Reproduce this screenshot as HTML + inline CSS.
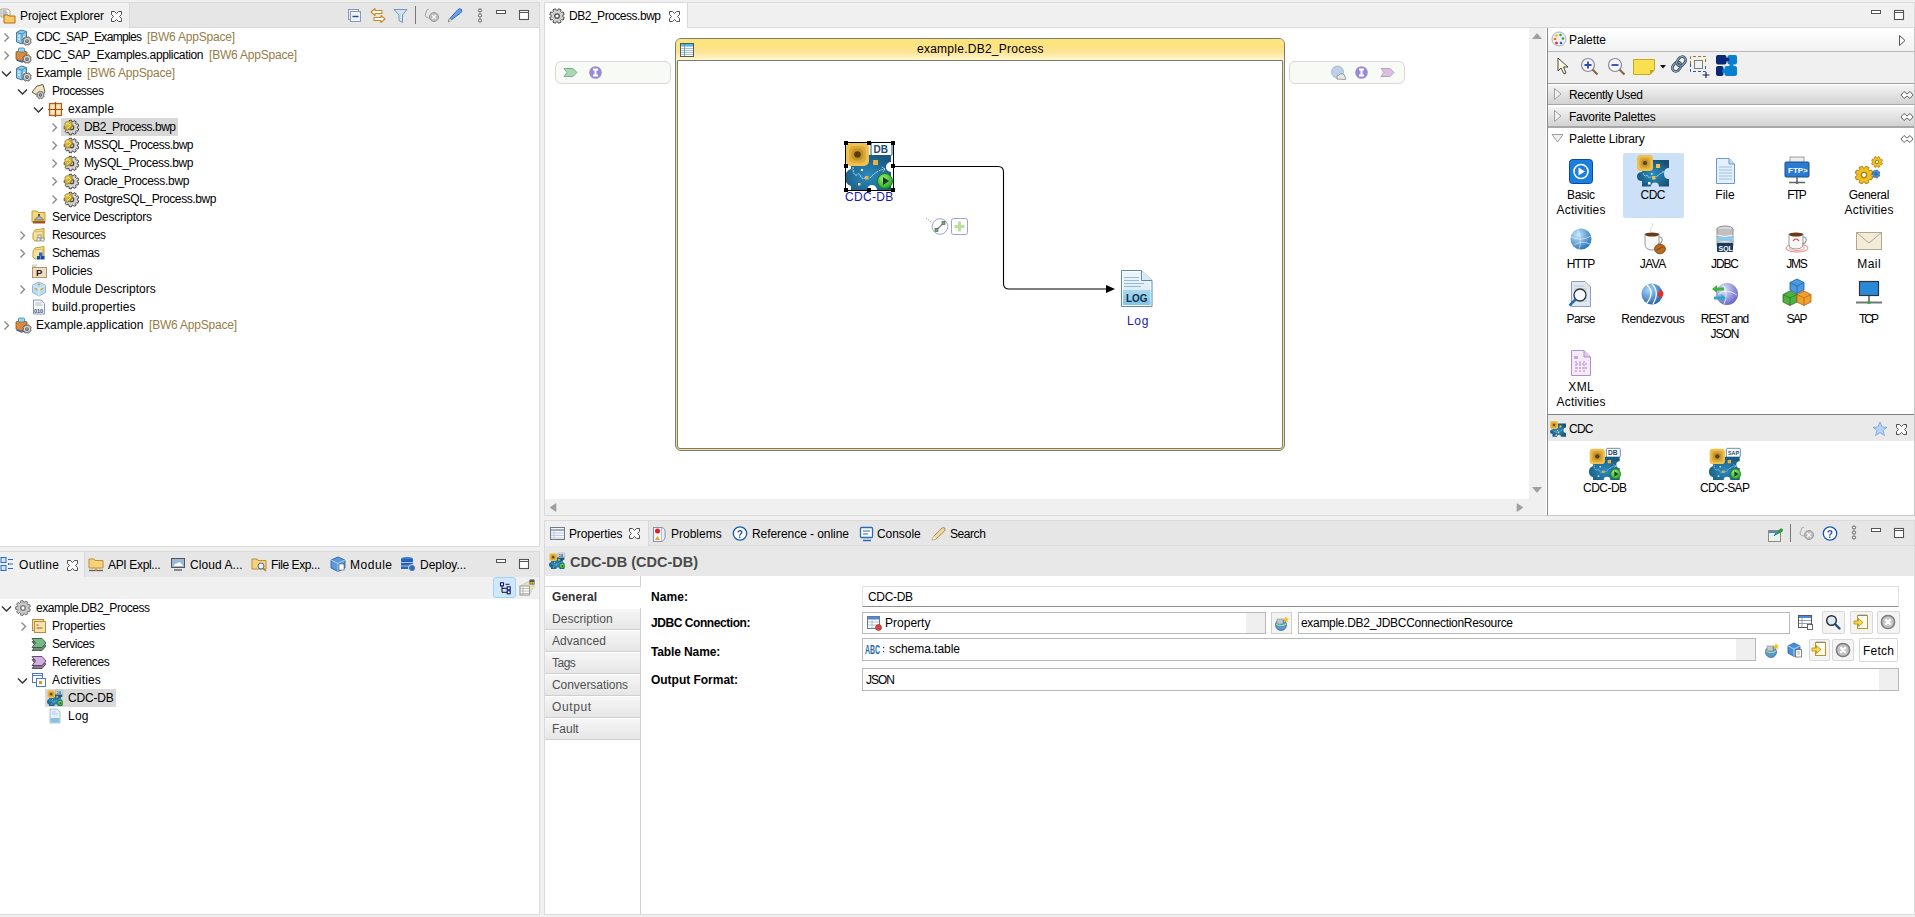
<!DOCTYPE html><html><head><meta charset="utf-8"><style>
*{margin:0;padding:0;box-sizing:border-box}
html,body{width:1915px;height:917px;overflow:hidden;background:#f0f0f0;font-family:"Liberation Sans",sans-serif;font-size:12px;color:#000}
.t{position:absolute;white-space:nowrap;letter-spacing:-0.2px}
svg{overflow:visible}
</style></head><body><div style="position:absolute;left:-1px;top:2px;width:541px;height:545px;border:1px solid #dadada;background:#fff"></div>
<div style="position:absolute;left:0px;top:3px;width:539px;height:25px;background:#e6e6e6;border-bottom:1px solid #d9d9d9"></div>
<div style="position:absolute;left:0px;top:3px;width:130px;height:25px;background:#f0f0f0;border-right:1px solid #d9d9d9"></div>
<div style="position:absolute;left:-1px;top:551px;width:541px;height:364px;border:1px solid #dadada;background:#fff"></div>
<div style="position:absolute;left:0px;top:552px;width:539px;height:25px;background:#e6e6e6"></div>
<div style="position:absolute;left:0px;top:552px;width:85px;height:25px;background:#f0f0f0;border-right:1px solid #d9d9d9"></div>
<div style="position:absolute;left:0px;top:577px;width:539px;height:22px;background:#f0f0f0"></div>
<div style="position:absolute;left:544px;top:2px;width:1371px;height:514px;border:1px solid #dadada;background:#fff"></div>
<div style="position:absolute;left:545px;top:3px;width:1369px;height:25px;background:#f0f0f0;border-bottom:1px solid #d9d9d9"></div>
<div style="position:absolute;left:545px;top:3px;width:143px;height:25px;background:#fff;border-right:1px solid #d9d9d9"></div>
<div style="position:absolute;left:544px;top:520px;width:1371px;height:395px;border:1px solid #dadada;background:#fff"></div>
<div style="position:absolute;left:545px;top:521px;width:1369px;height:25px;background:#e6e6e6;border-bottom:1px solid #d9d9d9"></div>
<div style="position:absolute;left:545px;top:521px;width:104px;height:25px;background:#f0f0f0;border-right:1px solid #d9d9d9"></div>
<div style="position:absolute;left:545px;top:546px;width:1369px;height:30px;background:#e8e8e8"></div>
<svg style="position:absolute;left:0px;top:8px" width="16" height="16" viewBox="0 0 16 16"><path d="M1 1 L8 1 L10 3 L10 9 L1 9 Z" fill="#f4f4f4" stroke="#b09a6a" stroke-width="0.9"/><path d="M2.5 3 h4 M2.5 5 h5 M2.5 7 h5" stroke="#4a70c0" stroke-width="0.8"/><path d="M4 7 L8 7 L9 8 L15 8 L15 15 L4 15 Z" fill="#f6cc60" stroke="#b06a20" stroke-width="1"/></svg>
<div class="t" style="left:20px;top:7px;line-height:18px;letter-spacing:-0.091px;">Project Explorer</div>
<svg style="position:absolute;left:111px;top:11px" width="11" height="11" viewBox="0 0 11 11"><path d="M0.5 0.5 H3.5 L5.5 2.5 L7.5 0.5 H10.5 V3.5 L8.5 5.5 L10.5 7.5 V10.5 H7.5 L5.5 8.5 L3.5 10.5 H0.5 V7.5 L2.5 5.5 L0.5 3.5 Z" fill="#fff" stroke="#505050" stroke-width="1"/></svg>
<svg style="position:absolute;left:347px;top:8px" width="16" height="16" viewBox="0 0 16 16"><rect x="1.5" y="1.5" width="10" height="10" fill="#e8eef8" stroke="#8090b0" stroke-width="0.9"/><rect x="3.5" y="3.5" width="10" height="10" fill="#eef3fa" stroke="#8090b0" stroke-width="0.9"/><path d="M5.5 8.5 h6" stroke="#1a4a90" stroke-width="1.4"/></svg>
<svg style="position:absolute;left:370px;top:7px" width="16" height="16" viewBox="0 0 16 16"><path d="M1 5 L5 1.5 L5 3.5 L12 3.5 L12 6.5 L5 6.5 L5 8.5 Z" fill="#fff" stroke="#c88a20" stroke-width="1.1" stroke-linejoin="round"/><path d="M15 12 L11 8.5 L11 10.5 L4 10.5 L4 13.5 L11 13.5 L11 15.5 Z" fill="#fff" stroke="#c88a20" stroke-width="1.1" stroke-linejoin="round"/></svg>
<svg style="position:absolute;left:393px;top:8px" width="16" height="16" viewBox="0 0 16 16"><path d="M1 1.5 H14 L9.5 7 V14.5 L6 12.5 V7 Z" fill="#cfe2f4" stroke="#7a98bc" stroke-width="1"/></svg>
<div style="position:absolute;left:415px;top:6px;width:1px;height:18px;background:#777"></div>
<svg style="position:absolute;left:424px;top:7px" width="16" height="16" viewBox="0 0 16 16"><path d="M5 2 Q2 2 2 6 Q0 8 2 10 Q4 12 7 10" fill="none" stroke="#aaa" stroke-width="1"/><circle cx="10" cy="10" r="4.5" fill="#bbb" stroke="#999"/><path d="M8 8 L12 12 M12 8 L8 12" stroke="#fff" stroke-width="1.2"/></svg>
<svg style="position:absolute;left:447px;top:7px" width="16" height="16" viewBox="0 0 16 16"><path d="M3 14 L1.5 15 L2 12.5 L11 2.5 Q13 1 14.5 2.5 Q15.5 4.5 13.5 6 Z" fill="#6aa0e8" stroke="#2a5ab8" stroke-width="0.9"/><path d="M1.5 15 L2.5 11.5 L5 13.5 Z" fill="#f0e080"/></svg>
<svg style="position:absolute;left:475px;top:8px" width="10" height="16" viewBox="0 0 10 16"><circle cx="5" cy="2.5" r="1.6" fill="#fff" stroke="#555" stroke-width="1"/><circle cx="5" cy="7.5" r="1.6" fill="#fff" stroke="#555" stroke-width="1"/><circle cx="5" cy="12.5" r="1.6" fill="#fff" stroke="#555" stroke-width="1"/></svg>
<svg style="position:absolute;left:495px;top:9px" width="13" height="8" viewBox="0 0 13 8"><rect x="1.5" y="1.5" width="9" height="3" fill="#fff" stroke="#555" stroke-width="1"/></svg>
<svg style="position:absolute;left:517px;top:9px" width="13" height="13" viewBox="0 0 13 13"><rect x="2.5" y="1.5" width="9" height="9" fill="#fff" stroke="#555" stroke-width="1.1"/><path d="M2.5 3.5 H11.5" stroke="#555" stroke-width="1"/></svg>
<svg style="position:absolute;left:-1px;top:29px" width="16" height="16" viewBox="0 0 16 16"><path d="M5.5 4.5 L9.5 8.5 L5.5 12.5" fill="none" stroke="#8a8a8a" stroke-width="1.4"/></svg>
<svg style="position:absolute;left:15px;top:29px" width="16" height="16" viewBox="0 0 16 16"><path d="M1.5 3.5 L6 1 L11.5 2.5 L11.5 12 L7 15 L1.5 13 Z" fill="#8ec9e8" stroke="#3d7fa8" stroke-width="1"/><path d="M1.5 3.5 L7 5 L11.5 2.5 M7 5 L7 15" fill="none" stroke="#3d7fa8" stroke-width="0.8"/><path d="M3 7 h2 M3 10 h2 M8.5 7.5 h2 M8.5 10.5 h2" stroke="#fff" stroke-width="1"/><polygon points="16.21,12.87 15.59,14.36 14.62,14.10 14.10,14.62 14.36,15.59 12.87,16.21 12.37,15.33 11.63,15.33 11.13,16.21 9.64,15.59 9.90,14.62 9.38,14.10 8.41,14.36 7.79,12.87 8.67,12.37 8.67,11.63 7.79,11.13 8.41,9.64 9.38,9.90 9.90,9.38 9.64,8.41 11.13,7.79 11.63,8.67 12.37,8.67 12.87,7.79 14.36,8.41 14.10,9.38 14.62,9.90 15.59,9.64 16.21,11.13 15.33,11.63 15.33,12.37" fill="#e0e0e0" stroke="#505050" stroke-width="0.9" stroke-linejoin="round"/><circle cx="12" cy="12" r="1.29" fill="#fff" stroke="#505050" stroke-width="1.17"/></svg>
<div class="t" style="left:36px;top:28px;line-height:18px;letter-spacing:-0.670px;">CDC_SAP_Examples</div>
<svg style="position:absolute;left:-1px;top:47px" width="16" height="16" viewBox="0 0 16 16"><path d="M5.5 4.5 L9.5 8.5 L5.5 12.5" fill="none" stroke="#8a8a8a" stroke-width="1.4"/></svg>
<svg style="position:absolute;left:15px;top:47px" width="16" height="16" viewBox="0 0 16 16"><path d="M1 5 L6 3 L12 5 L12 12 L6 14 L1 12 Z" fill="#d98a3a" stroke="#8a4a10" stroke-width="0.8"/><path d="M1.5 13 L7 15 L12 13" fill="none" stroke="#3050c0" stroke-width="1.2"/><rect x="3.5" y="1" width="6" height="4" rx="1" fill="#9ad6ee" stroke="#3d7fa8" stroke-width="0.8"/><polygon points="16.21,12.87 15.59,14.36 14.62,14.10 14.10,14.62 14.36,15.59 12.87,16.21 12.37,15.33 11.63,15.33 11.13,16.21 9.64,15.59 9.90,14.62 9.38,14.10 8.41,14.36 7.79,12.87 8.67,12.37 8.67,11.63 7.79,11.13 8.41,9.64 9.38,9.90 9.90,9.38 9.64,8.41 11.13,7.79 11.63,8.67 12.37,8.67 12.87,7.79 14.36,8.41 14.10,9.38 14.62,9.90 15.59,9.64 16.21,11.13 15.33,11.63 15.33,12.37" fill="#e0e0e0" stroke="#505050" stroke-width="0.9" stroke-linejoin="round"/><circle cx="12" cy="12" r="1.29" fill="#fff" stroke="#505050" stroke-width="1.17"/></svg>
<div class="t" style="left:36px;top:46px;line-height:18px;letter-spacing:-0.343px;">CDC_SAP_Examples.application</div>
<svg style="position:absolute;left:-1px;top:65px" width="16" height="16" viewBox="0 0 16 16"><path d="M3 6.5 L7.5 11 L12 6.5" fill="none" stroke="#333" stroke-width="1.4"/></svg>
<svg style="position:absolute;left:15px;top:65px" width="16" height="16" viewBox="0 0 16 16"><path d="M1.5 3.5 L6 1 L11.5 2.5 L11.5 12 L7 15 L1.5 13 Z" fill="#8ec9e8" stroke="#3d7fa8" stroke-width="1"/><path d="M1.5 3.5 L7 5 L11.5 2.5 M7 5 L7 15" fill="none" stroke="#3d7fa8" stroke-width="0.8"/><path d="M3 7 h2 M3 10 h2 M8.5 7.5 h2 M8.5 10.5 h2" stroke="#fff" stroke-width="1"/><polygon points="16.21,12.87 15.59,14.36 14.62,14.10 14.10,14.62 14.36,15.59 12.87,16.21 12.37,15.33 11.63,15.33 11.13,16.21 9.64,15.59 9.90,14.62 9.38,14.10 8.41,14.36 7.79,12.87 8.67,12.37 8.67,11.63 7.79,11.13 8.41,9.64 9.38,9.90 9.90,9.38 9.64,8.41 11.13,7.79 11.63,8.67 12.37,8.67 12.87,7.79 14.36,8.41 14.10,9.38 14.62,9.90 15.59,9.64 16.21,11.13 15.33,11.63 15.33,12.37" fill="#e0e0e0" stroke="#505050" stroke-width="0.9" stroke-linejoin="round"/><circle cx="12" cy="12" r="1.29" fill="#fff" stroke="#505050" stroke-width="1.17"/></svg>
<div class="t" style="left:36px;top:64px;line-height:18px;letter-spacing:-0.115px;">Example</div>
<svg style="position:absolute;left:15px;top:83px" width="16" height="16" viewBox="0 0 16 16"><path d="M3 6.5 L7.5 11 L12 6.5" fill="none" stroke="#333" stroke-width="1.4"/></svg>
<svg style="position:absolute;left:31px;top:83px" width="16" height="16" viewBox="0 0 16 16"><path d="M1 9 L6 3 L12 1.5 L14 9 L9 14 Z" fill="#efe6c8" stroke="#6a5a3a" stroke-width="1"/><polygon points="13.22,12.77 12.68,14.09 11.81,13.85 11.35,14.31 11.59,15.18 10.27,15.72 9.83,14.95 9.17,14.95 8.73,15.72 7.41,15.18 7.65,14.31 7.19,13.85 6.32,14.09 5.78,12.77 6.55,12.33 6.55,11.67 5.78,11.23 6.32,9.91 7.19,10.15 7.65,9.69 7.41,8.82 8.73,8.28 9.17,9.05 9.83,9.05 10.27,8.28 11.59,8.82 11.35,9.69 11.81,10.15 12.68,9.91 13.22,11.23 12.45,11.67 12.45,12.33" fill="#d8d8d8" stroke="#555" stroke-width="0.8" stroke-linejoin="round"/><circle cx="9.5" cy="12" r="1.14" fill="#fff" stroke="#555" stroke-width="1.04"/></svg>
<div class="t" style="left:52px;top:82px;line-height:18px;letter-spacing:-0.502px;">Processes</div>
<svg style="position:absolute;left:31px;top:101px" width="16" height="16" viewBox="0 0 16 16"><path d="M3 6.5 L7.5 11 L12 6.5" fill="none" stroke="#333" stroke-width="1.4"/></svg>
<svg style="position:absolute;left:47px;top:101px" width="16" height="16" viewBox="0 0 16 16"><rect x="2.5" y="2.5" width="12" height="12" fill="#f4d8a8" stroke="#b0601a" stroke-width="1.2"/><rect x="4" y="4" width="3.5" height="3.5" fill="#fbe8c8"/><rect x="9.5" y="4" width="3.5" height="3.5" fill="#fbe8c8"/><rect x="4" y="9.5" width="3.5" height="3.5" fill="#fbe8c8"/><rect x="9.5" y="9.5" width="3.5" height="3.5" fill="#fbe8c8"/><path d="M8.5 1 V16 M1 8.5 H16" stroke="#9a5010" stroke-width="1.2"/></svg>
<div class="t" style="left:68px;top:100px;line-height:18px;letter-spacing:0.107px;">example</div>
<div style="position:absolute;left:61px;top:118px;width:117px;height:18px;background:#d9d9d9"></div>
<svg style="position:absolute;left:47px;top:119px" width="16" height="16" viewBox="0 0 16 16"><path d="M5.5 4.5 L9.5 8.5 L5.5 12.5" fill="none" stroke="#8a8a8a" stroke-width="1.4"/></svg>
<svg style="position:absolute;left:63px;top:119px" width="16" height="16" viewBox="0 0 16 16"><polygon points="15.78,9.84 14.93,12.16 13.26,11.76 12.54,12.62 13.22,14.20 11.08,15.44 10.05,14.06 8.94,14.25 8.45,15.90 6.02,15.47 6.12,13.76 5.14,13.19 3.70,14.14 2.12,12.24 3.29,10.99 2.91,9.94 1.20,9.73 1.20,7.27 2.91,7.06 3.29,6.01 2.12,4.76 3.70,2.86 5.14,3.81 6.12,3.24 6.02,1.53 8.45,1.10 8.94,2.75 10.05,2.94 11.08,1.56 13.22,2.80 12.54,4.38 13.26,5.24 14.93,4.84 15.78,7.16 14.24,7.94 14.24,9.06" fill="#d4d4d4" stroke="#4a4a4a" stroke-width="1" stroke-linejoin="round"/><circle cx="8.5" cy="8.5" r="2.22" fill="#d4d4d4" stroke="#4a4a4a" stroke-width="1.30"/><defs><linearGradient id="gbw" x1="0" y1="0" x2="1" y2="1"><stop offset="0" stop-color="#f4dc60"/><stop offset="1" stop-color="#a88010"/></linearGradient></defs><g transform="translate(0.5,0.8) scale(0.85)"><path d="M1.5 6 Q2.5 1.5 7 1.8 Q11 2.5 10.5 7 Q9.5 12 4 12.5 Q1 11 1.5 6 Z" fill="url(#gbw)" stroke="#8a6a08" stroke-width="0.5"/><path d="M3 5 Q6 3.5 8.5 6.5 Q7 9.5 4 10" fill="none" stroke="#fff0a0" stroke-width="1"/></g></svg>
<div class="t" style="left:84px;top:118px;line-height:18px;letter-spacing:-0.479px;">DB2_Process.bwp</div>
<svg style="position:absolute;left:47px;top:137px" width="16" height="16" viewBox="0 0 16 16"><path d="M5.5 4.5 L9.5 8.5 L5.5 12.5" fill="none" stroke="#8a8a8a" stroke-width="1.4"/></svg>
<svg style="position:absolute;left:63px;top:137px" width="16" height="16" viewBox="0 0 16 16"><polygon points="15.78,9.84 14.93,12.16 13.26,11.76 12.54,12.62 13.22,14.20 11.08,15.44 10.05,14.06 8.94,14.25 8.45,15.90 6.02,15.47 6.12,13.76 5.14,13.19 3.70,14.14 2.12,12.24 3.29,10.99 2.91,9.94 1.20,9.73 1.20,7.27 2.91,7.06 3.29,6.01 2.12,4.76 3.70,2.86 5.14,3.81 6.12,3.24 6.02,1.53 8.45,1.10 8.94,2.75 10.05,2.94 11.08,1.56 13.22,2.80 12.54,4.38 13.26,5.24 14.93,4.84 15.78,7.16 14.24,7.94 14.24,9.06" fill="#d4d4d4" stroke="#4a4a4a" stroke-width="1" stroke-linejoin="round"/><circle cx="8.5" cy="8.5" r="2.22" fill="#d4d4d4" stroke="#4a4a4a" stroke-width="1.30"/><defs><linearGradient id="gbw" x1="0" y1="0" x2="1" y2="1"><stop offset="0" stop-color="#f4dc60"/><stop offset="1" stop-color="#a88010"/></linearGradient></defs><g transform="translate(0.5,0.8) scale(0.85)"><path d="M1.5 6 Q2.5 1.5 7 1.8 Q11 2.5 10.5 7 Q9.5 12 4 12.5 Q1 11 1.5 6 Z" fill="url(#gbw)" stroke="#8a6a08" stroke-width="0.5"/><path d="M3 5 Q6 3.5 8.5 6.5 Q7 9.5 4 10" fill="none" stroke="#fff0a0" stroke-width="1"/></g></svg>
<div class="t" style="left:84px;top:136px;line-height:18px;letter-spacing:-0.491px;">MSSQL_Process.bwp</div>
<svg style="position:absolute;left:47px;top:155px" width="16" height="16" viewBox="0 0 16 16"><path d="M5.5 4.5 L9.5 8.5 L5.5 12.5" fill="none" stroke="#8a8a8a" stroke-width="1.4"/></svg>
<svg style="position:absolute;left:63px;top:155px" width="16" height="16" viewBox="0 0 16 16"><polygon points="15.78,9.84 14.93,12.16 13.26,11.76 12.54,12.62 13.22,14.20 11.08,15.44 10.05,14.06 8.94,14.25 8.45,15.90 6.02,15.47 6.12,13.76 5.14,13.19 3.70,14.14 2.12,12.24 3.29,10.99 2.91,9.94 1.20,9.73 1.20,7.27 2.91,7.06 3.29,6.01 2.12,4.76 3.70,2.86 5.14,3.81 6.12,3.24 6.02,1.53 8.45,1.10 8.94,2.75 10.05,2.94 11.08,1.56 13.22,2.80 12.54,4.38 13.26,5.24 14.93,4.84 15.78,7.16 14.24,7.94 14.24,9.06" fill="#d4d4d4" stroke="#4a4a4a" stroke-width="1" stroke-linejoin="round"/><circle cx="8.5" cy="8.5" r="2.22" fill="#d4d4d4" stroke="#4a4a4a" stroke-width="1.30"/><defs><linearGradient id="gbw" x1="0" y1="0" x2="1" y2="1"><stop offset="0" stop-color="#f4dc60"/><stop offset="1" stop-color="#a88010"/></linearGradient></defs><g transform="translate(0.5,0.8) scale(0.85)"><path d="M1.5 6 Q2.5 1.5 7 1.8 Q11 2.5 10.5 7 Q9.5 12 4 12.5 Q1 11 1.5 6 Z" fill="url(#gbw)" stroke="#8a6a08" stroke-width="0.5"/><path d="M3 5 Q6 3.5 8.5 6.5 Q7 9.5 4 10" fill="none" stroke="#fff0a0" stroke-width="1"/></g></svg>
<div class="t" style="left:84px;top:154px;line-height:18px;letter-spacing:-0.366px;">MySQL_Process.bwp</div>
<svg style="position:absolute;left:47px;top:173px" width="16" height="16" viewBox="0 0 16 16"><path d="M5.5 4.5 L9.5 8.5 L5.5 12.5" fill="none" stroke="#8a8a8a" stroke-width="1.4"/></svg>
<svg style="position:absolute;left:63px;top:173px" width="16" height="16" viewBox="0 0 16 16"><polygon points="15.78,9.84 14.93,12.16 13.26,11.76 12.54,12.62 13.22,14.20 11.08,15.44 10.05,14.06 8.94,14.25 8.45,15.90 6.02,15.47 6.12,13.76 5.14,13.19 3.70,14.14 2.12,12.24 3.29,10.99 2.91,9.94 1.20,9.73 1.20,7.27 2.91,7.06 3.29,6.01 2.12,4.76 3.70,2.86 5.14,3.81 6.12,3.24 6.02,1.53 8.45,1.10 8.94,2.75 10.05,2.94 11.08,1.56 13.22,2.80 12.54,4.38 13.26,5.24 14.93,4.84 15.78,7.16 14.24,7.94 14.24,9.06" fill="#d4d4d4" stroke="#4a4a4a" stroke-width="1" stroke-linejoin="round"/><circle cx="8.5" cy="8.5" r="2.22" fill="#d4d4d4" stroke="#4a4a4a" stroke-width="1.30"/><defs><linearGradient id="gbw" x1="0" y1="0" x2="1" y2="1"><stop offset="0" stop-color="#f4dc60"/><stop offset="1" stop-color="#a88010"/></linearGradient></defs><g transform="translate(0.5,0.8) scale(0.85)"><path d="M1.5 6 Q2.5 1.5 7 1.8 Q11 2.5 10.5 7 Q9.5 12 4 12.5 Q1 11 1.5 6 Z" fill="url(#gbw)" stroke="#8a6a08" stroke-width="0.5"/><path d="M3 5 Q6 3.5 8.5 6.5 Q7 9.5 4 10" fill="none" stroke="#fff0a0" stroke-width="1"/></g></svg>
<div class="t" style="left:84px;top:172px;line-height:18px;letter-spacing:-0.312px;">Oracle_Process.bwp</div>
<svg style="position:absolute;left:47px;top:191px" width="16" height="16" viewBox="0 0 16 16"><path d="M5.5 4.5 L9.5 8.5 L5.5 12.5" fill="none" stroke="#8a8a8a" stroke-width="1.4"/></svg>
<svg style="position:absolute;left:63px;top:191px" width="16" height="16" viewBox="0 0 16 16"><polygon points="15.78,9.84 14.93,12.16 13.26,11.76 12.54,12.62 13.22,14.20 11.08,15.44 10.05,14.06 8.94,14.25 8.45,15.90 6.02,15.47 6.12,13.76 5.14,13.19 3.70,14.14 2.12,12.24 3.29,10.99 2.91,9.94 1.20,9.73 1.20,7.27 2.91,7.06 3.29,6.01 2.12,4.76 3.70,2.86 5.14,3.81 6.12,3.24 6.02,1.53 8.45,1.10 8.94,2.75 10.05,2.94 11.08,1.56 13.22,2.80 12.54,4.38 13.26,5.24 14.93,4.84 15.78,7.16 14.24,7.94 14.24,9.06" fill="#d4d4d4" stroke="#4a4a4a" stroke-width="1" stroke-linejoin="round"/><circle cx="8.5" cy="8.5" r="2.22" fill="#d4d4d4" stroke="#4a4a4a" stroke-width="1.30"/><defs><linearGradient id="gbw" x1="0" y1="0" x2="1" y2="1"><stop offset="0" stop-color="#f4dc60"/><stop offset="1" stop-color="#a88010"/></linearGradient></defs><g transform="translate(0.5,0.8) scale(0.85)"><path d="M1.5 6 Q2.5 1.5 7 1.8 Q11 2.5 10.5 7 Q9.5 12 4 12.5 Q1 11 1.5 6 Z" fill="url(#gbw)" stroke="#8a6a08" stroke-width="0.5"/><path d="M3 5 Q6 3.5 8.5 6.5 Q7 9.5 4 10" fill="none" stroke="#fff0a0" stroke-width="1"/></g></svg>
<div class="t" style="left:84px;top:190px;line-height:18px;letter-spacing:-0.391px;">PostgreSQL_Process.bwp</div>
<svg style="position:absolute;left:31px;top:209px" width="16" height="16" viewBox="0 0 16 16"><path d="M1 2 L6 2 L7 3.5 L14 3.5 L14 13 L1 13 Z" fill="#f4d77a" stroke="#b8922a" stroke-width="0.9"/><path d="M3.5 11 Q8 4 12.5 11 Z" fill="#b8b8b8" stroke="#555" stroke-width="0.7"/><rect x="2" y="12" width="12" height="2.5" fill="#a05a20"/><rect x="7" y="5" width="2" height="2" fill="#555"/></svg>
<div class="t" style="left:52px;top:208px;line-height:18px;letter-spacing:-0.224px;">Service Descriptors</div>
<svg style="position:absolute;left:15px;top:227px" width="16" height="16" viewBox="0 0 16 16"><path d="M5.5 4.5 L9.5 8.5 L5.5 12.5" fill="none" stroke="#8a8a8a" stroke-width="1.4"/></svg>
<svg style="position:absolute;left:31px;top:227px" width="16" height="16" viewBox="0 0 16 16"><path d="M2 6 L4 3 L10 2 L13 1.5 L13 13 L4 14 L2 12 Z" fill="#f6e29a" stroke="#b8922a" stroke-width="0.9"/><path d="M4 5 L12 4 L12 13" fill="none" stroke="#c9a640" stroke-width="0.7"/><rect x="7" y="8" width="3" height="3" fill="#fff" stroke="#888" stroke-width="0.8"/><rect x="10" y="11" width="3" height="3" fill="#fff" stroke="#888" stroke-width="0.8"/><rect x="6" y="11" width="3" height="3" fill="#fff" stroke="#888" stroke-width="0.8"/></svg>
<div class="t" style="left:52px;top:226px;line-height:18px;letter-spacing:-0.420px;">Resources</div>
<svg style="position:absolute;left:15px;top:245px" width="16" height="16" viewBox="0 0 16 16"><path d="M5.5 4.5 L9.5 8.5 L5.5 12.5" fill="none" stroke="#8a8a8a" stroke-width="1.4"/></svg>
<svg style="position:absolute;left:31px;top:245px" width="16" height="16" viewBox="0 0 16 16"><path d="M2 6 L4 3 L10 2 L13 1.5 L13 13 L4 14 L2 12 Z" fill="#f6e29a" stroke="#b8922a" stroke-width="0.9"/><path d="M4 5 L12 4 L12 13" fill="none" stroke="#c9a640" stroke-width="0.7"/><rect x="8" y="7.5" width="3.5" height="3.5" fill="#2a6ad8"/><rect x="6" y="11" width="3.5" height="3.5" fill="#1a4ab0"/><rect x="10" y="11" width="3.5" height="3.5" fill="#1a4ab0"/></svg>
<div class="t" style="left:52px;top:244px;line-height:18px;letter-spacing:-0.386px;">Schemas</div>
<svg style="position:absolute;left:31px;top:263px" width="16" height="16" viewBox="0 0 16 16"><path d="M1.5 3.5 L5 3.5 L6 2 L1.5 2 Z" fill="#fff" stroke="#b0a890" stroke-width="0.6"/><rect x="1.5" y="4.5" width="14" height="10" fill="#f4dcc0" stroke="#a89878" stroke-width="1"/><text x="5" y="13" font-family="Liberation Sans" font-weight="bold" font-size="9.5" fill="#1a1a1a">P</text></svg>
<div class="t" style="left:52px;top:262px;line-height:18px;letter-spacing:-0.108px;">Policies</div>
<svg style="position:absolute;left:15px;top:281px" width="16" height="16" viewBox="0 0 16 16"><path d="M5.5 4.5 L9.5 8.5 L5.5 12.5" fill="none" stroke="#8a8a8a" stroke-width="1.4"/></svg>
<svg style="position:absolute;left:31px;top:281px" width="16" height="16" viewBox="0 0 16 16"><path d="M8 1 L14.5 4 L14.5 11.5 L8 15 L1.5 11.5 L1.5 4 Z" fill="#bcdcf0" stroke="#7aaad0" stroke-width="0.8"/><path d="M1.5 4 L8 7.5 L14.5 4 M8 7.5 V15" fill="none" stroke="#e8f4ff" stroke-width="0.8"/><path d="M4 7 L6 9 M10 9 L12 7 M7 3.5 L9 3.5" stroke="#d0a020" stroke-width="1.5"/></svg>
<div class="t" style="left:52px;top:280px;line-height:18px;letter-spacing:0.019px;">Module Descriptors</div>
<svg style="position:absolute;left:31px;top:299px" width="16" height="16" viewBox="0 0 16 16"><path d="M2.5 1 L10 1 L13.5 4.5 L13.5 15 L2.5 15 Z" fill="#f4f6fa" stroke="#8090a8" stroke-width="0.9"/><path d="M4.5 4 h6 M4.5 6 h7" stroke="#a0b0c8" stroke-width="0.8"/><text x="3" y="14" font-family="Liberation Sans" font-weight="bold" font-size="5.5" fill="#2a4a80">010</text></svg>
<div class="t" style="left:52px;top:298px;line-height:18px;letter-spacing:0.104px;">build.properties</div>
<svg style="position:absolute;left:-1px;top:317px" width="16" height="16" viewBox="0 0 16 16"><path d="M5.5 4.5 L9.5 8.5 L5.5 12.5" fill="none" stroke="#8a8a8a" stroke-width="1.4"/></svg>
<svg style="position:absolute;left:15px;top:317px" width="16" height="16" viewBox="0 0 16 16"><path d="M1 5 L6 3 L12 5 L12 12 L6 14 L1 12 Z" fill="#d98a3a" stroke="#8a4a10" stroke-width="0.8"/><path d="M1.5 13 L7 15 L12 13" fill="none" stroke="#3050c0" stroke-width="1.2"/><rect x="3.5" y="1" width="6" height="4" rx="1" fill="#9ad6ee" stroke="#3d7fa8" stroke-width="0.8"/><polygon points="16.21,12.87 15.59,14.36 14.62,14.10 14.10,14.62 14.36,15.59 12.87,16.21 12.37,15.33 11.63,15.33 11.13,16.21 9.64,15.59 9.90,14.62 9.38,14.10 8.41,14.36 7.79,12.87 8.67,12.37 8.67,11.63 7.79,11.13 8.41,9.64 9.38,9.90 9.90,9.38 9.64,8.41 11.13,7.79 11.63,8.67 12.37,8.67 12.87,7.79 14.36,8.41 14.10,9.38 14.62,9.90 15.59,9.64 16.21,11.13 15.33,11.63 15.33,12.37" fill="#e0e0e0" stroke="#505050" stroke-width="0.9" stroke-linejoin="round"/><circle cx="12" cy="12" r="1.29" fill="#fff" stroke="#505050" stroke-width="1.17"/></svg>
<div class="t" style="left:36px;top:316px;line-height:18px;letter-spacing:0.001px;">Example.application</div>
<div class="t" style="left:147px;top:28px;line-height:18px;letter-spacing:-0.207px;color:#957d47">[BW6 AppSpace]</div>
<div class="t" style="left:209px;top:46px;line-height:18px;letter-spacing:-0.207px;color:#957d47">[BW6 AppSpace]</div>
<div class="t" style="left:87px;top:64px;line-height:18px;letter-spacing:-0.207px;color:#957d47">[BW6 AppSpace]</div>
<div class="t" style="left:149px;top:316px;line-height:18px;letter-spacing:-0.207px;color:#957d47">[BW6 AppSpace]</div>
<svg style="position:absolute;left:0px;top:556px" width="16" height="16" viewBox="0 0 16 16"><rect x="1" y="1.5" width="5" height="5" fill="#cfe4fa" stroke="#2a6ac8" stroke-width="1"/><rect x="1" y="9.5" width="5" height="5" fill="#cfe4fa" stroke="#2a6ac8" stroke-width="1"/><path d="M8 3.5 h5 M10 8 h3 M8 12.5 h5" stroke="#2a6ac8" stroke-width="1"/><rect x="8" y="7" width="1.5" height="2" fill="#2a6ac8"/></svg>
<div class="t" style="left:19px;top:556px;line-height:18px;letter-spacing:0.331px;">Outline</div>
<svg style="position:absolute;left:67px;top:560px" width="11" height="11" viewBox="0 0 11 11"><path d="M0.5 0.5 H3.5 L5.5 2.5 L7.5 0.5 H10.5 V3.5 L8.5 5.5 L10.5 7.5 V10.5 H7.5 L5.5 8.5 L3.5 10.5 H0.5 V7.5 L2.5 5.5 L0.5 3.5 Z" fill="#fff" stroke="#505050" stroke-width="1"/></svg>
<svg style="position:absolute;left:88px;top:556px" width="16" height="16" viewBox="0 0 16 16"><path d="M1 3 L6 3 L7 4.5 L15 4.5 L15 12 L1 12 Z" fill="#f6d37a" stroke="#b8862a" stroke-width="0.9"/><path d="M1 14.5 H15" stroke="#666" stroke-width="1.4"/><rect x="7" y="12" width="2" height="2.5" fill="#e8a020"/></svg>
<div class="t" style="left:108px;top:556px;line-height:18px;letter-spacing:-0.338px;">API Expl...</div>
<svg style="position:absolute;left:170px;top:556px" width="16" height="16" viewBox="0 0 16 16"><rect x="1.5" y="2.5" width="13" height="9" fill="#9ab8d8" stroke="#555" stroke-width="1"/><path d="M4 10 Q4 7 7 7.5 Q9 5 11 7.5 Q13 8 12.5 10 Z" fill="#fff"/><rect x="4" y="13" width="8" height="2" fill="#888"/></svg>
<div class="t" style="left:190px;top:556px;line-height:18px;letter-spacing:0.065px;">Cloud A...</div>
<svg style="position:absolute;left:251px;top:556px" width="16" height="16" viewBox="0 0 16 16"><path d="M1 3 L6 3 L7 4.5 L15 4.5 L15 13 L1 13 Z" fill="#f6d37a" stroke="#b8862a" stroke-width="0.9"/><circle cx="10" cy="10" r="3" fill="#e8f0ff" stroke="#4a6a9a" stroke-width="1"/><path d="M12 12 L15 15" stroke="#c08020" stroke-width="1.5"/></svg>
<div class="t" style="left:271px;top:556px;line-height:18px;letter-spacing:-0.413px;">File Exp...</div>
<svg style="position:absolute;left:330px;top:556px" width="16" height="16" viewBox="0 0 16 16"><path d="M8 1 L15 4 L15 12 L8 15.5 L1 12 L1 4 Z" fill="#5a9ad8" stroke="#2a5a9a" stroke-width="0.8"/><path d="M1 4 L8 7.5 L15 4 M8 7.5 V15.5" fill="none" stroke="#bfe0ff" stroke-width="0.8"/><rect x="9" y="8" width="5" height="6" fill="#fff" stroke="#555" stroke-width="0.6"/></svg>
<div class="t" style="left:350px;top:556px;line-height:18px;letter-spacing:0.528px;">Module</div>
<svg style="position:absolute;left:400px;top:556px" width="16" height="16" viewBox="0 0 16 16"><ellipse cx="7" cy="3" rx="6" ry="2" fill="#3a7ad0"/><rect x="1" y="3" width="12" height="10" fill="#2a62b8"/><path d="M1 6.5 H13 M1 10 H13" stroke="#9ac4f4" stroke-width="1"/><circle cx="12" cy="12" r="3.5" fill="#3a6aa8" stroke="#fff" stroke-width="0.8"/></svg>
<div class="t" style="left:420px;top:556px;line-height:18px;letter-spacing:-0.007px;">Deploy...</div>
<svg style="position:absolute;left:495px;top:558px" width="13" height="8" viewBox="0 0 13 8"><rect x="1.5" y="1.5" width="9" height="3" fill="#fff" stroke="#555" stroke-width="1"/></svg>
<svg style="position:absolute;left:517px;top:558px" width="13" height="13" viewBox="0 0 13 13"><rect x="2.5" y="1.5" width="9" height="9" fill="#fff" stroke="#555" stroke-width="1.1"/><path d="M2.5 3.5 H11.5" stroke="#555" stroke-width="1"/></svg>
<div style="position:absolute;left:493px;top:577px;width:23px;height:21px;background:#cfe8fb;border:1px solid #9fd3fb;border-radius:3px"></div>
<svg style="position:absolute;left:497px;top:580px" width="16" height="16" viewBox="0 0 16 16"><path d="M5 5 V12.3 H10 M5 8.3 H10" fill="none" stroke="#111" stroke-width="1"/><path d="M8.5 4.3 H12.5" stroke="#222" stroke-width="1"/><rect x="3.5" y="2.8" width="3" height="3" fill="#fff" stroke="#10107a" stroke-width="1.1"/><rect x="10.2" y="6.8" width="3" height="3" fill="#fff" stroke="#10107a" stroke-width="1.1"/><rect x="10.2" y="10.8" width="3" height="3" fill="#fff" stroke="#10107a" stroke-width="1.1"/></svg>
<svg style="position:absolute;left:519px;top:579px" width="18" height="18" viewBox="0 0 18 18"><path d="M1 7 L12 1 H15 V8 L10 16 H1 Z" fill="#e4e0c0" stroke="#c8c4a0" stroke-width="0.6"/><rect x="1" y="7" width="9.5" height="9" fill="#fff" stroke="#999" stroke-width="1"/><path d="M1 9.5 H10.5 M1 12 H10.5 M1 14.5 H10.5 M4 7 V16" stroke="#aaa" stroke-width="0.8"/><rect x="10.5" y="0.5" width="5" height="5" rx="0.5" fill="#555"/><rect x="11.5" y="3" width="1.3" height="1.8" fill="#f0e000"/><rect x="13.5" y="3" width="1.3" height="1.8" fill="#f0e000"/></svg>
<svg style="position:absolute;left:-1px;top:600px" width="16" height="16" viewBox="0 0 16 16"><path d="M3 6.5 L7.5 11 L12 6.5" fill="none" stroke="#333" stroke-width="1.4"/></svg>
<svg style="position:absolute;left:15px;top:600px" width="16" height="16" viewBox="0 0 16 16"><polygon points="15.38,9.35 14.52,11.70 12.83,11.31 12.09,12.18 12.78,13.78 10.61,15.03 9.57,13.63 8.45,13.83 7.95,15.50 5.48,15.07 5.58,13.33 4.59,12.76 3.14,13.71 1.53,11.80 2.72,10.53 2.33,9.45 0.61,9.25 0.61,6.75 2.33,6.55 2.72,5.47 1.53,4.20 3.14,2.29 4.59,3.24 5.58,2.67 5.48,0.93 7.95,0.50 8.45,2.17 9.57,2.37 10.61,0.97 12.78,2.22 12.09,3.82 12.83,4.69 14.52,4.30 15.38,6.65 13.82,7.43 13.82,8.57" fill="#c8c8c8" stroke="#666" stroke-width="0.9" stroke-linejoin="round"/><circle cx="8" cy="8" r="2.25" fill="#fff" stroke="#666" stroke-width="1.17"/></svg>
<div class="t" style="left:36px;top:599px;line-height:18px;letter-spacing:-0.447px;">example.DB2_Process</div>
<svg style="position:absolute;left:16px;top:618px" width="16" height="16" viewBox="0 0 16 16"><path d="M5.5 4.5 L9.5 8.5 L5.5 12.5" fill="none" stroke="#8a8a8a" stroke-width="1.4"/></svg>
<svg style="position:absolute;left:31px;top:618px" width="16" height="16" viewBox="0 0 16 16"><rect x="1.5" y="1.5" width="11" height="11" fill="#f4dfa8" stroke="#b88a3a" stroke-width="1"/><rect x="3.5" y="3.5" width="11" height="11" fill="#f6e2b0" stroke="#b88a3a" stroke-width="1"/><path d="M5.5 7 h2 M5.5 10 h6" stroke="#8a6a2a" stroke-width="1"/></svg>
<div class="t" style="left:52px;top:617px;line-height:18px;letter-spacing:-0.132px;">Properties</div>
<svg style="position:absolute;left:31px;top:636px" width="16" height="16" viewBox="0 0 16 16"><path d="M1 5.5 H11 L15 10 L11 14.5 H1 L4.5 10 Z" fill="#7a8a7a" stroke="#3a4a3a" stroke-width="0.8"/><path d="M1 2.5 H11 L15 7 L11 11.5 H1 L4.5 7 Z" fill="#78b888" stroke="#2a5a3a" stroke-width="0.9"/></svg>
<div class="t" style="left:52px;top:635px;line-height:18px;letter-spacing:-0.474px;">Services</div>
<svg style="position:absolute;left:31px;top:654px" width="16" height="16" viewBox="0 0 16 16"><path d="M1 5.5 H11 L15 10 L11 14.5 H1 L4.5 10 Z" fill="#8a7a8a" stroke="#4a3a4a" stroke-width="0.8"/><path d="M1 2.5 H11 L15 7 L11 11.5 H1 L4.5 7 Z" fill="#d0b0e0" stroke="#5a3a6a" stroke-width="0.9"/></svg>
<div class="t" style="left:52px;top:653px;line-height:18px;letter-spacing:-0.407px;">References</div>
<svg style="position:absolute;left:15px;top:672px" width="16" height="16" viewBox="0 0 16 16"><path d="M3 6.5 L7.5 11 L12 6.5" fill="none" stroke="#333" stroke-width="1.4"/></svg>
<svg style="position:absolute;left:31px;top:672px" width="16" height="16" viewBox="0 0 16 16"><rect x="1.5" y="1.5" width="10" height="9" fill="#fff" stroke="#4a7ac8" stroke-width="1"/><path d="M1.5 3.5 H11.5" stroke="#4a7ac8"/><rect x="5.5" y="6.5" width="9" height="8" fill="#fff" stroke="#4a7ac8" stroke-width="1"/><rect x="8" y="9" width="3" height="3" fill="#d89a30"/></svg>
<div class="t" style="left:52px;top:671px;line-height:18px;letter-spacing:0.162px;">Activities</div>
<div style="position:absolute;left:45px;top:689px;width:71px;height:18px;background:#d9d9d9"></div>
<svg style="position:absolute;left:47px;top:690px" width="16" height="16" viewBox="0 0 16 16"><g transform="scale(0.3333)"><defs><radialGradient id="cdcg4" cx="0.5" cy="0.6" r="0.6"><stop offset="0" stop-color="#2a8cc0"/><stop offset="1" stop-color="#1a5a80"/></radialGradient><radialGradient id="gld4" cx="0.5" cy="0.5" r="0.6"><stop offset="0" stop-color="#7a5a10"/><stop offset="0.25" stop-color="#c09030"/><stop offset="0.6" stop-color="#e0b050"/><stop offset="1" stop-color="#f0c060"/></radialGradient><radialGradient id="grn4" cx="0.4" cy="0.35" r="0.7"><stop offset="0" stop-color="#a0f070"/><stop offset="1" stop-color="#20a020"/></radialGradient></defs><path d="M6 13 H46 V20 A5 5 0 0 0 46 30 V48 H32 A5 5 0 0 0 22 48 H6 V44 A9 9 0 0 1 6 27 Z" fill="url(#cdcg4)"/><rect x="1" y="1" width="23" height="23" rx="5" fill="#f0c04c"/><rect x="4" y="4" width="17" height="17" rx="5" fill="#dcaa3c"/><rect x="6.5" y="6.5" width="12" height="12" rx="5" fill="#c4942a"/><circle cx="12.5" cy="12.5" r="3.3" fill="#5a3e0a"/><rect x="26" y="0.5" width="21" height="13" rx="1.5" fill="#fff" stroke="#1a5a80" stroke-width="1"/><text x="28.5" y="11" font-family="Liberation Sans" font-weight="bold" font-size="10" fill="#1a4a70">DB</text><rect x="28" y="18" width="5" height="5" fill="#e8b040"/><rect x="20" y="34" width="3.5" height="3.5" fill="#e8b040"/><rect x="16" y="27" width="2" height="2" fill="#fff"/><rect x="13" y="41" width="2.5" height="2.5" fill="#f0d090"/><path d="M8 25 Q8 34 12 33 Q14 30 16 35 Q18 38 21 35 M25 36 Q32 28 40 27 L37 25 M40 27 L38 30" fill="none" stroke="#d0e8f8" stroke-width="0.9" stroke-dasharray="2 0.8"/><circle cx="40" cy="39" r="7.5" fill="url(#grn4)" stroke="#188018" stroke-width="1"/><path d="M38 35 L44 39 L38 43 Z" fill="#123a2a"/></g></svg>
<div class="t" style="left:68px;top:689px;line-height:18px;">CDC-DB</div>
<svg style="position:absolute;left:47px;top:708px" width="16" height="16" viewBox="0 0 16 16"><path d="M3 1 L10 1 L13 4 L13 15 L3 15 Z" fill="#e4f0fa" stroke="#9ab4cc" stroke-width="0.8"/><rect x="3.5" y="10" width="9" height="4.5" fill="#8ac0e8"/><path d="M5 4 h4 M5 6 h6" stroke="#a8c0d8" stroke-width="0.8"/></svg>
<div class="t" style="left:68px;top:707px;line-height:18px;letter-spacing:0.242px;">Log</div>
<svg style="position:absolute;left:549px;top:8px" width="16" height="16" viewBox="0 0 16 16"><polygon points="15.25,9.50 14.18,12.06 12.50,11.61 11.61,12.50 12.06,14.18 9.50,15.25 8.63,13.74 7.37,13.74 6.50,15.25 3.94,14.18 4.39,12.50 3.50,11.61 1.82,12.06 0.75,9.50 2.26,8.63 2.26,7.37 0.75,6.50 1.82,3.94 3.50,4.39 4.39,3.50 3.94,1.82 6.50,0.75 7.37,2.26 8.63,2.26 9.50,0.75 12.06,1.82 11.61,3.50 12.50,4.39 14.18,3.94 15.25,6.50 13.74,7.37 13.74,8.63" fill="#d0d0d0" stroke="#4a4a4a" stroke-width="1" stroke-linejoin="round"/><circle cx="8" cy="8" r="2.22" fill="#fff" stroke="#4a4a4a" stroke-width="1.30"/></svg>
<div class="t" style="left:569px;top:7px;line-height:18px;letter-spacing:-0.479px;">DB2_Process.bwp</div>
<svg style="position:absolute;left:669px;top:11px" width="11" height="11" viewBox="0 0 11 11"><path d="M0.5 0.5 H3.5 L5.5 2.5 L7.5 0.5 H10.5 V3.5 L8.5 5.5 L10.5 7.5 V10.5 H7.5 L5.5 8.5 L3.5 10.5 H0.5 V7.5 L2.5 5.5 L0.5 3.5 Z" fill="#fff" stroke="#505050" stroke-width="1"/></svg>
<svg style="position:absolute;left:1870px;top:9px" width="13" height="8" viewBox="0 0 13 8"><rect x="1.5" y="1.5" width="9" height="3" fill="#fff" stroke="#555" stroke-width="1"/></svg>
<svg style="position:absolute;left:1892px;top:9px" width="13" height="13" viewBox="0 0 13 13"><rect x="2.5" y="1.5" width="9" height="9" fill="#fff" stroke="#555" stroke-width="1.1"/><path d="M2.5 3.5 H11.5" stroke="#555" stroke-width="1"/></svg>
<div style="position:absolute;left:1529px;top:28px;width:17px;height:471px;background:#f0f0f0"></div>
<svg style="position:absolute;left:1531px;top:31px" width="12" height="10" viewBox="0 0 12 10"><path d="M1 8 L6 2 L11 8 Z" fill="#a0a0a0"/></svg>
<svg style="position:absolute;left:1531px;top:485px" width="12" height="10" viewBox="0 0 12 10"><path d="M1 2 L6 8 L11 2 Z" fill="#a0a0a0"/></svg>
<div style="position:absolute;left:545px;top:499px;width:1001px;height:16px;background:#f0f0f0"></div>
<svg style="position:absolute;left:549px;top:503px" width="10" height="10" viewBox="0 0 10 10"><path d="M7 0.5 L1 4.5 L7 8.5 Z" fill="#a0a0a0" stroke="#a0a0a0" stroke-width="0.6" stroke-linejoin="round"/></svg>
<svg style="position:absolute;left:1516px;top:503px" width="10" height="10" viewBox="0 0 10 10"><path d="M1 0.5 L7 4.5 L1 8.5 Z" fill="#a0a0a0" stroke="#a0a0a0" stroke-width="0.6" stroke-linejoin="round"/></svg>
<div style="position:absolute;left:1529px;top:499px;width:17px;height:16px;background:#f0f0f0"></div>
<div style="position:absolute;left:555px;top:61px;width:116px;height:23px;background:#f8faf6;border:1px solid #d8d8d8;border-radius:6px"></div>
<svg style="position:absolute;left:563px;top:67px" width="16" height="12" viewBox="0 0 16 12"><path d="M1 1.5 H10 L14 5.5 L10 9.5 H1 L4 5.5 Z" fill="#a8d8b8" stroke="#6a9a7a" stroke-width="0.8"/></svg>
<svg style="position:absolute;left:589px;top:66px" width="14" height="14" viewBox="0 0 14 14"><circle cx="6.5" cy="6.5" r="6.3" fill="#9a8ad0"/><path d="M4 3.5 H9 M6.5 3.5 V9.5 M4 9.5 H9" stroke="#fff" stroke-width="2"/></svg>
<div style="position:absolute;left:1289px;top:61px;width:116px;height:23px;background:#f8faf6;border:1px solid #d8d8d8;border-radius:6px"></div>
<svg style="position:absolute;left:1330px;top:65px" width="18" height="18" viewBox="0 0 18 18"><circle cx="7.5" cy="7" r="6" fill="#bcd0e8" stroke="#8aa0c0" stroke-width="0.6"/><path d="M7 14 Q6 10 9 10 Q10 8 12.5 9 Q15 9 15 12 Q16.5 13 15.5 14.5 Z" fill="#e8e8e8" stroke="#888" stroke-width="0.8"/></svg>
<svg style="position:absolute;left:1355px;top:66px" width="14" height="14" viewBox="0 0 14 14"><circle cx="6.5" cy="6.5" r="6.3" fill="#9a8ad0"/><path d="M4 3.5 H9 M6.5 3.5 V9.5 M4 9.5 H9" stroke="#fff" stroke-width="2"/></svg>
<svg style="position:absolute;left:1380px;top:67px" width="16" height="12" viewBox="0 0 16 12"><path d="M1 1.5 H10 L14 5.5 L10 9.5 H1 L4 5.5 Z" fill="#dcc0e0" stroke="#b090b8" stroke-width="0.8"/></svg>
<div style="position:absolute;left:675px;top:38px;width:610px;height:413px;border:1px solid #7a7a7a;border-radius:6px;background:#fde38a"></div>
<div style="position:absolute;left:676px;top:39px;width:608px;height:22px;border-radius:5px 5px 0 0;background:linear-gradient(#ffe57a 0%,#fde382 35%,#fde49a 60%,#fffbd0 100%)"></div>
<div style="position:absolute;left:677px;top:60px;width:606px;height:389px;border:1px solid #7a7a7a;border-radius:0 0 3px 3px;background:#fff"></div>
<svg style="position:absolute;left:680px;top:43px" width="14" height="14" viewBox="0 0 14 14"><rect x="0.5" y="0.5" width="13" height="13" fill="#fff" stroke="#505a66" stroke-width="1"/><rect x="1" y="1" width="12" height="2.5" fill="#5ab0e8"/><path d="M1 5.5 H13 M1 7.5 H13 M1 9.5 H13 M1 11.5 H13" stroke="#a8c0d4" stroke-width="1"/><path d="M4.5 1 V13" stroke="#5a8aa8" stroke-width="0.8"/></svg>
<div class="t" style="left:917px;top:40px;line-height:18px;letter-spacing:0.253px;">example.DB2_Process</div>
<svg style="position:absolute;left:845px;top:142px" width="48" height="48" viewBox="0 0 48 48"><defs><radialGradient id="cdcg" cx="0.5" cy="0.6" r="0.6"><stop offset="0" stop-color="#2a8cc0"/><stop offset="1" stop-color="#1a5a80"/></radialGradient><radialGradient id="gld" cx="0.5" cy="0.5" r="0.6"><stop offset="0" stop-color="#7a5a10"/><stop offset="0.25" stop-color="#c09030"/><stop offset="0.6" stop-color="#e0b050"/><stop offset="1" stop-color="#f0c060"/></radialGradient><radialGradient id="grn" cx="0.4" cy="0.35" r="0.7"><stop offset="0" stop-color="#a0f070"/><stop offset="1" stop-color="#20a020"/></radialGradient></defs><path d="M6 13 H46 V20 A5 5 0 0 0 46 30 V48 H32 A5 5 0 0 0 22 48 H6 V44 A9 9 0 0 1 6 27 Z" fill="url(#cdcg)"/><rect x="1" y="1" width="23" height="23" rx="5" fill="#f0c04c"/><rect x="4" y="4" width="17" height="17" rx="5" fill="#dcaa3c"/><rect x="6.5" y="6.5" width="12" height="12" rx="5" fill="#c4942a"/><circle cx="12.5" cy="12.5" r="3.3" fill="#5a3e0a"/><rect x="26" y="0.5" width="21" height="13" rx="1.5" fill="#fff" stroke="#1a5a80" stroke-width="1"/><text x="28.5" y="11" font-family="Liberation Sans" font-weight="bold" font-size="10" fill="#1a4a70">DB</text><rect x="28" y="18" width="5" height="5" fill="#e8b040"/><rect x="20" y="34" width="3.5" height="3.5" fill="#e8b040"/><rect x="16" y="27" width="2" height="2" fill="#fff"/><rect x="13" y="41" width="2.5" height="2.5" fill="#f0d090"/><path d="M8 25 Q8 34 12 33 Q14 30 16 35 Q18 38 21 35 M25 36 Q32 28 40 27 L37 25 M40 27 L38 30" fill="none" stroke="#d0e8f8" stroke-width="0.9" stroke-dasharray="2 0.8"/><circle cx="40" cy="39" r="7.5" fill="url(#grn)" stroke="#188018" stroke-width="1"/><path d="M38 35 L44 39 L38 43 Z" fill="#123a2a"/></svg>
<div style="position:absolute;left:845px;top:142px;width:49px;height:49px;border:1px solid #000"></div>
<div style="position:absolute;left:844px;top:141px;width:4px;height:4px;background:#000"></div>
<div style="position:absolute;left:867px;top:141px;width:4px;height:4px;background:#000"></div>
<div style="position:absolute;left:891px;top:141px;width:4px;height:4px;background:#000"></div>
<div style="position:absolute;left:844px;top:164px;width:4px;height:4px;background:#000"></div>
<div style="position:absolute;left:891px;top:164px;width:4px;height:4px;background:#000"></div>
<div style="position:absolute;left:844px;top:188px;width:4px;height:4px;background:#000"></div>
<div style="position:absolute;left:867px;top:188px;width:4px;height:4px;background:#000"></div>
<div style="position:absolute;left:891px;top:188px;width:4px;height:4px;background:#000"></div>
<div class="t" style="left:845px;top:188px;line-height:18px;letter-spacing:0.342px;color:#1a1aa8">CDC-DB</div>
<svg style="position:absolute;left:893px;top:160px" width="230" height="140" viewBox="0 0 230 140"><path d="M2 6.5 H105 Q110.5 6.5 110.5 12 V123.5 Q110.5 129 116 129 H214" fill="none" stroke="#000" stroke-width="1.1"/><path d="M213 125 L222 129 L213 133 Z" fill="#000"/></svg>
<svg style="position:absolute;left:1121px;top:270px" width="32" height="38" viewBox="0 0 32 38"><defs><linearGradient id="lgb" x1="0" y1="0" x2="0" y2="1"><stop offset="0" stop-color="#eef5fa"/><stop offset="1" stop-color="#d4e6f2"/></linearGradient><linearGradient id="lgc" x1="0" y1="0" x2="0" y2="1"><stop offset="0" stop-color="#a8d8ee"/><stop offset="1" stop-color="#80c4e6"/></linearGradient></defs><path d="M0.5 0.5 H20.5 L31 10.5 V36.5 H0.5 Z" fill="#fff" stroke="#5a8ab0" stroke-width="1"/><path d="M2 2 H20 V10 H29.5 V35 H2 Z" fill="url(#lgb)"/><path d="M20.5 0.5 V10.5 H31" fill="#f4f8fb" stroke="#5a8ab0" stroke-width="1"/><path d="M21.5 1.5 L30 10 H21.5 Z" fill="#dce8f0"/><path d="M3 7.5 H18 M3 10.5 H18 M3 13.5 H23 M3 16.5 H20" stroke="#8ab4d4" stroke-width="0.9"/><rect x="2" y="20" width="27.5" height="15" fill="url(#lgc)"/><text x="5" y="32" font-family="Liberation Sans" font-weight="bold" font-size="11" fill="#0e2e4a" textLength="21.5" lengthAdjust="spacingAndGlyphs">LOG</text></svg>
<div class="t" style="left:1127px;top:312px;line-height:18px;letter-spacing:0.692px;color:#1a1aa8">Log</div>
<svg style="position:absolute;left:924px;top:216px" width="46" height="22" viewBox="0 0 46 22"><path d="M2 2 L7 6" stroke="#8a8ab0" stroke-width="0.8" stroke-dasharray="1.5 1"/><circle cx="16" cy="10.5" r="7.8" fill="#fff" stroke="#a0a0d8" stroke-width="1"/><path d="M12.5 14 L19.5 7" stroke="#333" stroke-width="1"/><rect x="11" y="12.5" width="3" height="3" fill="#60c060" stroke="#333" stroke-width="0.5"/><rect x="18" y="5.5" width="3" height="3" fill="#60c060" stroke="#333" stroke-width="0.5"/><rect x="27.5" y="2.5" width="16" height="16" rx="2" fill="#fff" stroke="#a0a0d8" stroke-width="1"/><path d="M35.5 5.5 V15.5 M30.5 10.5 H40.5" stroke="#b8e0a0" stroke-width="3"/></svg>
<div style="position:absolute;left:1547px;top:28px;width:368px;height:488px;background:#fff;border-left:1px solid #8a8a8a;border-right:1px solid #c8c8c8;border-bottom:1px solid #c8c8c8"></div>
<div style="position:absolute;left:1548px;top:28px;width:366px;height:24px;background:linear-gradient(#ffffff,#f2f2f2);border-bottom:1px solid #b8b8b8"></div>
<svg style="position:absolute;left:1551px;top:31px" width="16" height="16" viewBox="0 0 16 16"><circle cx="8" cy="8" r="7" fill="#f0f0f4" stroke="#9aa0b8" stroke-width="0.8"/><circle cx="5.5" cy="4.5" r="1.3" fill="#f0c000"/><circle cx="9.5" cy="4" r="1.3" fill="#40a040"/><circle cx="4" cy="8" r="1.3" fill="#f07000"/><circle cx="12" cy="7.5" r="1.3" fill="#30a030"/><circle cx="5.5" cy="12" r="1.3" fill="#e02020"/><circle cx="10" cy="12" r="1.3" fill="#2060e0"/></svg>
<div class="t" style="left:1569px;top:31px;line-height:18px;letter-spacing:-0.091px;">Palette</div>
<svg style="position:absolute;left:1898px;top:34px" width="10" height="14" viewBox="0 0 10 14"><path d="M1.5 1.5 L7 6.5 L1.5 11.5 Z" fill="#fff" stroke="#555" stroke-width="1"/></svg>
<div style="position:absolute;left:1548px;top:52px;width:366px;height:32px;background:#f0f0f0;border-bottom:1px solid #a0a0a0"></div>
<svg style="position:absolute;left:1556px;top:57px" width="16" height="18" viewBox="0 0 16 18"><path d="M2 1 L2 14 L5 11 L8 17 L10 16 L7.5 10 L12 10 Z" fill="#fffbd8" stroke="#333" stroke-width="0.9" stroke-linejoin="round"/></svg>
<svg style="position:absolute;left:1580px;top:57px" width="20" height="20" viewBox="0 0 20 20"><circle cx="8" cy="8" r="6.5" fill="#f4f4f8" stroke="#8a8aa0" stroke-width="1.2"/><path d="M8 4.5 V11.5 M4.5 8 H11.5" stroke="#2a4ab0" stroke-width="1.8"/><path d="M12.5 12.5 L17.5 17.5" stroke="#8a6a40" stroke-width="2.2"/></svg>
<svg style="position:absolute;left:1607px;top:57px" width="20" height="20" viewBox="0 0 20 20"><circle cx="8" cy="8" r="6.5" fill="#f4f4f8" stroke="#8a8aa0" stroke-width="1.2"/><path d="M4.5 8 H11.5" stroke="#2a4ab0" stroke-width="1.8"/><path d="M12.5 12.5 L17.5 17.5" stroke="#8a6a40" stroke-width="2.2"/></svg>
<svg style="position:absolute;left:1633px;top:59px" width="22" height="16" viewBox="0 0 22 16"><path d="M0.5 0.5 H21.5 V11 L17 15.5 H0.5 Z" fill="#f8e050" stroke="#c8a820" stroke-width="1"/><path d="M21.5 11 H17 V15.5 Z" fill="#c8a020"/></svg>
<svg style="position:absolute;left:1660px;top:65px" width="8" height="6" viewBox="0 0 8 6"><path d="M0 0 H6 L3 3.5 Z" fill="#111"/></svg>
<svg style="position:absolute;left:1669px;top:54px" width="20" height="20" viewBox="0 0 20 20"><g transform="rotate(-50 10 10)"><rect x="1.5" y="6.5" width="10" height="7" rx="3.5" fill="none" stroke="#2a3a4a" stroke-width="2.6"/><rect x="1.5" y="6.5" width="10" height="7" rx="3.5" fill="none" stroke="#8aa8c0" stroke-width="1.2"/><rect x="8.5" y="6.5" width="10" height="7" rx="3.5" fill="none" stroke="#2a3a4a" stroke-width="2.6"/><rect x="8.5" y="6.5" width="10" height="7" rx="3.5" fill="none" stroke="#8aa8c0" stroke-width="1.2"/></g></svg>
<svg style="position:absolute;left:1689px;top:55px" width="24" height="24" viewBox="0 0 24 24"><path d="M1.5 9 V1.5 H16.5 V9" fill="none" stroke="#9a7a20" stroke-width="1" stroke-dasharray="3 2"/><path d="M1.5 9 V16.5 H16.5 V9" fill="none" stroke="#1a5ab0" stroke-width="1" stroke-dasharray="3 2"/><rect x="5.5" y="5.5" width="8" height="8" fill="#e8f4f8" stroke="#8a8060" stroke-width="1"/><path d="M17 17 V23 M13.5 20 H20.5" stroke="#1a2a50" stroke-width="1.2"/></svg>
<svg style="position:absolute;left:1716px;top:55px" width="21" height="21" viewBox="0 0 21 21"><rect x="0" y="0" width="10.5" height="9.5" rx="2" fill="#0a2a78"/><rect x="11.5" y="0" width="9.5" height="9.5" rx="2" fill="#0a80d0"/><rect x="0" y="11" width="7.5" height="10" rx="2" fill="#0a2a78"/><rect x="8.5" y="11" width="12.5" height="10" rx="2" fill="#0a80d0"/><circle cx="11.5" cy="4.5" r="2" fill="#0a2a78"/><circle cx="15.5" cy="11" r="2.2" fill="#0a80d0"/><circle cx="8" cy="16" r="2" fill="#0a80d0"/></svg>
<div style="position:absolute;left:1548px;top:84px;width:366px;height:21px;background:linear-gradient(#f4f4f4,#d2d2d2);border-bottom:1px solid #a8a8a8;border-top:1px solid #fff"></div>
<svg style="position:absolute;left:1553px;top:87px" width="10" height="14" viewBox="0 0 10 14"><path d="M1.5 1.5 L8 7 L1.5 12.5 Z" fill="#f0f0f0" stroke="#a0a0a0" stroke-width="1"/></svg>
<div class="t" style="left:1569px;top:86px;line-height:18px;letter-spacing:-0.344px;">Recently Used</div>
<svg style="position:absolute;left:1900px;top:90px" width="14" height="10" viewBox="0 0 14 10"><path d="M1 5 L4 1.5 L7 4 L10 1.5 L13 5 L10 8.5 L7 6 L4 8.5 Z" fill="#fff" stroke="#555" stroke-width="0.9"/></svg>
<div style="position:absolute;left:1548px;top:106px;width:366px;height:21px;background:linear-gradient(#f4f4f4,#d2d2d2);border-bottom:1px solid #a8a8a8;border-top:1px solid #fff"></div>
<svg style="position:absolute;left:1553px;top:109px" width="10" height="14" viewBox="0 0 10 14"><path d="M1.5 1.5 L8 7 L1.5 12.5 Z" fill="#f0f0f0" stroke="#a0a0a0" stroke-width="1"/></svg>
<div class="t" style="left:1569px;top:108px;line-height:18px;letter-spacing:-0.213px;">Favorite Palettes</div>
<svg style="position:absolute;left:1900px;top:112px" width="14" height="10" viewBox="0 0 14 10"><path d="M1 5 L4 1.5 L7 4 L10 1.5 L13 5 L10 8.5 L7 6 L4 8.5 Z" fill="#fff" stroke="#555" stroke-width="0.9"/></svg>
<div style="position:absolute;left:1548px;top:127px;width:366px;height:1px;background:#a8a8a8"></div>
<svg style="position:absolute;left:1551px;top:133px" width="14" height="10" viewBox="0 0 14 10"><path d="M1 1.5 L12 1.5 L6.5 9 Z" fill="#f0f0f0" stroke="#a0a0a0" stroke-width="1"/></svg>
<div class="t" style="left:1569px;top:130px;line-height:18px;letter-spacing:-0.119px;">Palette Library</div>
<svg style="position:absolute;left:1900px;top:134px" width="14" height="10" viewBox="0 0 14 10"><path d="M1 5 L4 1.5 L7 4 L10 1.5 L13 5 L10 8.5 L7 6 L4 8.5 Z" fill="#fff" stroke="#555" stroke-width="0.9"/></svg>
<div style="position:absolute;left:1623px;top:153px;width:61px;height:65px;background:#cce0f8;border-radius:2px"></div>
<svg style="position:absolute;left:1565px;top:155px" width="32" height="32" viewBox="0 0 32 32"><rect x="4.5" y="4.5" width="23" height="24" rx="3" fill="#1a7ee0" stroke="#0a4a9a" stroke-width="1"/><circle cx="16" cy="16.5" r="7" fill="none" stroke="#fff" stroke-width="1.6"/><path d="M13.5 12.5 L20 16.5 L13.5 20.5 Z" fill="#fff"/></svg>
<div class="t" style="left:1541px;top:187px;width:80px;text-align:center;line-height:16px;letter-spacing:-0.361px;text-indent:-0.361px">Basic</div>
<div class="t" style="left:1541px;top:202px;width:80px;text-align:center;line-height:16px;letter-spacing:0.173px;text-indent:0.173px">Activities</div>
<svg style="position:absolute;left:1637px;top:155px" width="32" height="32" viewBox="0 0 32 32"><defs><radialGradient id="pcg" cx="0.5" cy="0.55" r="0.6"><stop offset="0" stop-color="#2a90c4"/><stop offset="1" stop-color="#174f74"/></radialGradient></defs><path d="M5 5 H32 V13 Q27 13 27 18.5 Q27 24 32 24 V31.5 H22 Q22 27.5 18 27.5 Q14 27.5 14 31.5 H5 V26 Q0 26 0 21.5 Q0 17 5 17 Z" fill="url(#pcg)"/><rect x="0" y="0" width="16" height="16" rx="3.5" fill="#f0c04c"/><rect x="2.5" y="2.5" width="11" height="11" rx="3" fill="#d8a838"/><rect x="4.5" y="4.5" width="7" height="7" rx="3" fill="#c09028"/><circle cx="8" cy="8" r="2" fill="#5a3e0a"/><rect x="19" y="9" width="4" height="4" fill="#f0c050"/><rect x="15" y="21" width="3.5" height="3.5" fill="#f0c050"/><rect x="11" y="27" width="2.5" height="2.5" fill="#fff"/><rect x="14" y="18" width="1.5" height="1.5" fill="#fff"/><path d="M6 18 Q8 23 10 20 Q11 24 14 22 M19 22 Q23 18 27 17 L25 16" fill="none" stroke="#b8d8ec" stroke-width="0.7"/></svg>
<div class="t" style="left:1613px;top:187px;width:80px;text-align:center;line-height:16px;letter-spacing:-0.608px;text-indent:-0.608px">CDC</div>
<svg style="position:absolute;left:1709px;top:155px" width="32" height="32" viewBox="0 0 32 32"><path d="M7.5 3.5 H20 L25.5 9 V28.5 H7.5 Z" fill="#e4f0fc" stroke="#6a9ad0" stroke-width="1"/><path d="M20 3.5 V9 H25.5" fill="#c0daf4" stroke="#6a9ad0" stroke-width="1"/><path d="M10 12 H23 M10 15 H23 M10 18 H23 M10 21 H23 M10 24 H23" stroke="#9ac0e8" stroke-width="1"/></svg>
<div class="t" style="left:1685px;top:187px;width:80px;text-align:center;line-height:16px;letter-spacing:-0.015px;text-indent:-0.015px">File</div>
<svg style="position:absolute;left:1781px;top:155px" width="32" height="32" viewBox="0 0 32 32"><rect x="9" y="2" width="14" height="6" fill="#eee" stroke="#888" stroke-width="0.8"/><rect x="4" y="7" width="24" height="15" rx="1" fill="#2a7ad0" stroke="#1a4a90" stroke-width="1"/><text x="7" y="18" font-family="Liberation Sans" font-weight="bold" font-size="8" fill="#fff">FTP&gt;</text><path d="M16 22 V27 M8 27.5 H24" stroke="#666" stroke-width="1.5"/><circle cx="16" cy="27.5" r="1.5" fill="#666"/></svg>
<div class="t" style="left:1757px;top:187px;width:80px;text-align:center;line-height:16px;letter-spacing:-1.678px;text-indent:-1.678px">FTP</div>
<svg style="position:absolute;left:1853px;top:155px" width="32" height="32" viewBox="0 0 32 32"><g transform="translate(0,4)"><polygon points="19.81,17.83 18.52,20.94 16.48,20.39 15.39,21.48 15.94,23.52 12.83,24.81 11.77,22.98 10.23,22.98 9.17,24.81 6.06,23.52 6.61,21.48 5.52,20.39 3.48,20.94 2.19,17.83 4.02,16.77 4.02,15.23 2.19,14.17 3.48,11.06 5.52,11.61 6.61,10.52 6.06,8.48 9.17,7.19 10.23,9.02 11.77,9.02 12.83,7.19 15.94,8.48 15.39,10.52 16.48,11.61 18.52,11.06 19.81,14.17 17.98,15.23 17.98,16.77" fill="#f0c020" stroke="#b08010" stroke-width="1" stroke-linejoin="round"/><circle cx="11" cy="16" r="2.70" fill="#fff" stroke="#b08010" stroke-width="1.30"/></g><polygon points="29.39,8.12 28.60,10.02 27.35,9.68 26.68,10.35 27.02,11.60 25.12,12.39 24.47,11.26 23.53,11.26 22.88,12.39 20.98,11.60 21.32,10.35 20.65,9.68 19.40,10.02 18.61,8.12 19.74,7.47 19.74,6.53 18.61,5.88 19.40,3.98 20.65,4.32 21.32,3.65 20.98,2.40 22.88,1.61 23.53,2.74 24.47,2.74 25.12,1.61 27.02,2.40 26.68,3.65 27.35,4.32 28.60,3.98 29.39,5.88 28.26,6.53 28.26,7.47" fill="#f0c020" stroke="#b08010" stroke-width="0.8" stroke-linejoin="round"/><circle cx="24" cy="7" r="1.65" fill="#fff" stroke="#b08010" stroke-width="1.04"/><polygon points="26.89,19.93 26.15,21.47 25.24,21.18 24.62,21.66 24.70,22.62 23.04,23.00 22.69,22.10 21.93,21.93 21.23,22.59 19.90,21.52 20.38,20.70 20.04,19.99 19.09,19.86 19.09,18.14 20.04,18.01 20.38,17.30 19.90,16.48 21.23,15.41 21.93,16.07 22.69,15.90 23.04,15.00 24.70,15.38 24.62,16.34 25.24,16.82 26.15,16.53 26.89,18.07 26.10,18.61 26.10,19.39" fill="#4a90d0" stroke="#2a5a90" stroke-width="0.7" stroke-linejoin="round"/><circle cx="23" cy="19" r="1.20" fill="#4a90d0" stroke="#2a5a90" stroke-width="0.91"/></svg>
<div class="t" style="left:1829px;top:187px;width:80px;text-align:center;line-height:16px;letter-spacing:-0.331px;text-indent:-0.331px">General</div>
<div class="t" style="left:1829px;top:202px;width:80px;text-align:center;line-height:16px;letter-spacing:0.173px;text-indent:0.173px">Activities</div>
<svg style="position:absolute;left:1565px;top:224px" width="32" height="32" viewBox="0 0 32 32"><defs><radialGradient id="glb" cx="0.35" cy="0.3" r="0.8"><stop offset="0" stop-color="#c8e8ff"/><stop offset="1" stop-color="#1a6ab0"/></radialGradient></defs><circle cx="16" cy="15" r="10.5" fill="url(#glb)"/><path d="M6 13 Q16 18 26 12 M12 5 Q18 14 14 25 M9 21 Q17 16 25 20" fill="none" stroke="#e8f4ff" stroke-width="0.6"/></svg>
<div class="t" style="left:1541px;top:256px;width:80px;text-align:center;line-height:16px;letter-spacing:-0.943px;text-indent:-0.943px">HTTP</div>
<svg style="position:absolute;left:1637px;top:224px" width="32" height="32" viewBox="0 0 32 32"><path d="M8 10 H22 V20 Q22 26 15 26 Q8 26 8 20 Z" fill="#f8f8f8" stroke="#999" stroke-width="1"/><ellipse cx="15" cy="10.5" rx="7" ry="2" fill="#6a3a1a"/><path d="M22 13 Q26 13 25 17 Q24 20 21 20" fill="none" stroke="#999" stroke-width="1.2"/><path d="M14 8 Q12 5 15 3 Q17 1 15 -1" fill="none" stroke="#ccc" stroke-width="0.7"/><ellipse cx="23" cy="25" rx="5.5" ry="4.8" fill="#b86a20" stroke="#7a4010" stroke-width="0.8"/><path d="M19.5 26 Q23 24 26 23" stroke="#6a3a10" stroke-width="0.8" fill="none"/></svg>
<div class="t" style="left:1613px;top:256px;width:80px;text-align:center;line-height:16px;letter-spacing:-0.540px;text-indent:-0.540px">JAVA</div>
<svg style="position:absolute;left:1709px;top:224px" width="32" height="32" viewBox="0 0 32 32"><ellipse cx="16" cy="5" rx="8" ry="3" fill="#d8d8d8" stroke="#777" stroke-width="0.8"/><path d="M8 5 V22 H24 V5" fill="#c0c0c0" stroke="#777" stroke-width="0.8"/><path d="M8 11 Q16 14 24 11 M8 16 Q16 19 24 16" fill="none" stroke="#fff" stroke-width="0.8"/><rect x="8" y="13" width="16" height="4" fill="#8ac8f0"/><rect x="8" y="19" width="16" height="9" rx="1" fill="#1a3a5a"/><text x="9.5" y="26.5" font-family="Liberation Sans" font-weight="bold" font-size="7" fill="#fff">SQL</text></svg>
<div class="t" style="left:1685px;top:256px;width:80px;text-align:center;line-height:16px;letter-spacing:-1.148px;text-indent:-1.148px">JDBC</div>
<svg style="position:absolute;left:1781px;top:224px" width="32" height="32" viewBox="0 0 32 32"><ellipse cx="16" cy="24" rx="11" ry="4" fill="none" stroke="#f08080" stroke-width="1"/><ellipse cx="16" cy="24" rx="7.5" ry="2.5" fill="none" stroke="#f0a0a0" stroke-width="1"/><path d="M8 10 H22 V20 Q22 25 15 25 Q8 25 8 20 Z" fill="#f8f8f8" stroke="#999" stroke-width="1"/><ellipse cx="15" cy="10.5" rx="7" ry="2" fill="#6a3a1a"/><path d="M22 13 Q26 13 25 17 Q24 20 21 20" fill="none" stroke="#999" stroke-width="1.2"/><path d="M12 17 Q15 13 18 17" fill="none" stroke="#e04040" stroke-width="1.2"/></svg>
<div class="t" style="left:1757px;top:256px;width:80px;text-align:center;line-height:16px;letter-spacing:-1.150px;text-indent:-1.150px">JMS</div>
<svg style="position:absolute;left:1853px;top:224px" width="32" height="32" viewBox="0 0 32 32"><rect x="3.5" y="8.5" width="25" height="17" fill="#f4ecd8" stroke="#b0a890" stroke-width="1"/><path d="M3.5 8.5 L16 19 L28.5 8.5" fill="none" stroke="#b0a890" stroke-width="1"/></svg>
<div class="t" style="left:1829px;top:256px;width:80px;text-align:center;line-height:16px;letter-spacing:0.428px;text-indent:0.428px">Mail</div>
<svg style="position:absolute;left:1565px;top:278px" width="32" height="32" viewBox="0 0 32 32"><path d="M6.5 3.5 H20 L25.5 9 V28.5 H6.5 Z" fill="#dfe8f0" stroke="#8aa0b8" stroke-width="1"/><path d="M9 8 H19 M9 11 H22 M9 14 H22 M9 17 H22 M9 20 H22 M9 23 H22" stroke="#b8c8d8" stroke-width="1"/><circle cx="15" cy="17" r="6" fill="#f4f8ff" stroke="#333" stroke-width="1.3"/><path d="M10.5 21.5 L4.5 27.5" stroke="#2a6ab0" stroke-width="2.5"/></svg>
<div class="t" style="left:1541px;top:311px;width:80px;text-align:center;line-height:16px;letter-spacing:-0.586px;text-indent:-0.586px">Parse</div>
<svg style="position:absolute;left:1637px;top:278px" width="32" height="32" viewBox="0 0 32 32"><defs><radialGradient id="rvg" cx="0.35" cy="0.3" r="0.8"><stop offset="0" stop-color="#a8d8ff"/><stop offset="1" stop-color="#1a5aa0"/></radialGradient></defs><circle cx="15" cy="16" r="10.5" fill="url(#rvg)"/><path d="M10 7 Q18 14 10 25 M15 6 Q23 14 16 26" fill="none" stroke="#fff" stroke-width="1.2"/><path d="M23 12 Q28 16 23 20" fill="none" stroke="#e03030" stroke-width="2"/><circle cx="23" cy="16" r="2.5" fill="#e03030"/></svg>
<div class="t" style="left:1613px;top:311px;width:80px;text-align:center;line-height:16px;letter-spacing:-0.345px;text-indent:-0.345px">Rendezvous</div>
<svg style="position:absolute;left:1709px;top:278px" width="32" height="32" viewBox="0 0 32 32"><defs><radialGradient id="rsg" cx="0.35" cy="0.3" r="0.8"><stop offset="0" stop-color="#e0e8ff"/><stop offset="1" stop-color="#5a5ac0"/></radialGradient></defs><circle cx="18" cy="16" r="11" fill="url(#rsg)"/><path d="M9 16 Q18 10 28 17 M14 7 Q20 16 15 26" fill="none" stroke="#fff" stroke-width="0.7"/><path d="M3 11 L8 7 V9.5 H15 V12.5 H8 V15 Z" fill="#40b040"/><path d="M17 20 L12 16 V18.5 H5 V21.5 H12 V24 Z" fill="#30a8c8"/></svg>
<div class="t" style="left:1685px;top:311px;width:80px;text-align:center;line-height:16px;letter-spacing:-0.975px;text-indent:-0.975px">REST and</div>
<div class="t" style="left:1685px;top:326px;width:80px;text-align:center;line-height:16px;letter-spacing:-1.000px;text-indent:-1.000px">JSON</div>
<svg style="position:absolute;left:1781px;top:278px" width="32" height="32" viewBox="0 0 32 32"><path d="M16 1 L23 4.5 L23 12 L16 15.5 L9 12 L9 4.5 Z" fill="#4a9ae0" stroke="#1a5aa0" stroke-width="0.8"/><path d="M9 4.5 L16 8 L23 4.5 M16 8 V15.5" fill="none" stroke="#1a5aa0" stroke-width="0.7"/><path d="M9 13 L16 16.5 L16 24 L9 27.5 L2 24 L2 16.5 Z" fill="#50b040" stroke="#2a7020" stroke-width="0.8"/><path d="M2 16.5 L9 20 L16 16.5 M9 20 V27.5" fill="none" stroke="#2a7020" stroke-width="0.7"/><path d="M23 13 L30 16.5 L30 24 L23 27.5 L16 24 L16 16.5 Z" fill="#f0a030" stroke="#b06010" stroke-width="0.8"/><path d="M16 16.5 L23 20 L30 16.5 M23 20 V27.5" fill="none" stroke="#b06010" stroke-width="0.7"/></svg>
<div class="t" style="left:1757px;top:311px;width:80px;text-align:center;line-height:16px;letter-spacing:-1.600px;text-indent:-1.600px">SAP</div>
<svg style="position:absolute;left:1853px;top:278px" width="32" height="32" viewBox="0 0 32 32"><rect x="6.5" y="3.5" width="19" height="14" fill="#2a8ad8" stroke="#333" stroke-width="1.2"/><path d="M16 18 V24" stroke="#555" stroke-width="1.5"/><path d="M3 24.5 H29" stroke="#777" stroke-width="2"/><circle cx="16" cy="24.5" r="1.8" fill="#3a3"/></svg>
<div class="t" style="left:1829px;top:311px;width:80px;text-align:center;line-height:16px;letter-spacing:-1.900px;text-indent:-1.900px">TCP</div>
<svg style="position:absolute;left:1565px;top:347px" width="32" height="32" viewBox="0 0 32 32"><path d="M6.5 3.5 H19 L25.5 10 V28.5 H6.5 Z" fill="#f4eaf8" stroke="#b090c8" stroke-width="1"/><path d="M19 3.5 V10 H25.5" fill="#e0c8f0" stroke="#b090c8" stroke-width="1"/><rect x="9" y="9" width="4" height="3" fill="#c8a8e0"/><path d="M11 14 V26 M15 14 V26 M19 14 V26 M11 17 H22 M11 21 H22" stroke="#c8a8e0" stroke-width="1.5" stroke-dasharray="2 1"/></svg>
<div class="t" style="left:1541px;top:379px;width:80px;text-align:center;line-height:16px;letter-spacing:0.364px;text-indent:0.364px">XML</div>
<div class="t" style="left:1541px;top:394px;width:80px;text-align:center;line-height:16px;letter-spacing:0.173px;text-indent:0.173px">Activities</div>
<div style="position:absolute;left:1548px;top:414px;width:366px;height:1px;background:#808080"></div>
<div style="position:absolute;left:1548px;top:415px;width:366px;height:26px;background:#eaeaea"></div>
<svg style="position:absolute;left:1550px;top:421px" width="16" height="16" viewBox="0 0 32 32"><defs><radialGradient id="pcg2" cx="0.5" cy="0.55" r="0.6"><stop offset="0" stop-color="#2a90c4"/><stop offset="1" stop-color="#174f74"/></radialGradient></defs><path d="M5 5 H32 V13 Q27 13 27 18.5 Q27 24 32 24 V31.5 H22 Q22 27.5 18 27.5 Q14 27.5 14 31.5 H5 V26 Q0 26 0 21.5 Q0 17 5 17 Z" fill="url(#pcg2)"/><rect x="0" y="0" width="16" height="16" rx="3.5" fill="#f0c04c"/><rect x="2.5" y="2.5" width="11" height="11" rx="3" fill="#d8a838"/><rect x="4.5" y="4.5" width="7" height="7" rx="3" fill="#c09028"/><circle cx="8" cy="8" r="2" fill="#5a3e0a"/><rect x="19" y="9" width="4" height="4" fill="#f0c050"/><rect x="15" y="21" width="3.5" height="3.5" fill="#f0c050"/><rect x="11" y="27" width="2.5" height="2.5" fill="#fff"/><rect x="14" y="18" width="1.5" height="1.5" fill="#fff"/><path d="M6 18 Q8 23 10 20 Q11 24 14 22 M19 22 Q23 18 27 17 L25 16" fill="none" stroke="#b8d8ec" stroke-width="0.7"/></svg>
<div class="t" style="left:1569px;top:420px;line-height:18px;letter-spacing:-0.758px;">CDC</div>
<svg style="position:absolute;left:1872px;top:421px" width="16" height="16" viewBox="0 0 16 16"><path d="M8 1 L10 6 L15 6.3 L11 9.5 L12.5 14.5 L8 11.5 L3.5 14.5 L5 9.5 L1 6.3 L6 6 Z" fill="#b8d4f8" stroke="#7aa8e0" stroke-width="0.9"/></svg>
<svg style="position:absolute;left:1896px;top:424px" width="10" height="10" viewBox="0 0 10 10"><path d="M0.5 0.5 H3.5 L5.5 2.5 L7.5 0.5 H10.5 V3.5 L8.5 5.5 L10.5 7.5 V10.5 H7.5 L5.5 8.5 L3.5 10.5 H0.5 V7.5 L2.5 5.5 L0.5 3.5 Z" fill="#fff" stroke="#505050" stroke-width="1"/></svg>
<svg style="position:absolute;left:1589px;top:448px" width="32" height="32" viewBox="0 0 48 48"><defs><radialGradient id="cdcg2" cx="0.5" cy="0.6" r="0.6"><stop offset="0" stop-color="#2a8cc0"/><stop offset="1" stop-color="#1a5a80"/></radialGradient><radialGradient id="gld2" cx="0.5" cy="0.5" r="0.6"><stop offset="0" stop-color="#7a5a10"/><stop offset="0.25" stop-color="#c09030"/><stop offset="0.6" stop-color="#e0b050"/><stop offset="1" stop-color="#f0c060"/></radialGradient><radialGradient id="grn2" cx="0.4" cy="0.35" r="0.7"><stop offset="0" stop-color="#a0f070"/><stop offset="1" stop-color="#20a020"/></radialGradient></defs><path d="M6 13 H46 V20 A5 5 0 0 0 46 30 V48 H32 A5 5 0 0 0 22 48 H6 V44 A9 9 0 0 1 6 27 Z" fill="url(#cdcg2)"/><rect x="1" y="1" width="23" height="23" rx="5" fill="#f0c04c"/><rect x="4" y="4" width="17" height="17" rx="5" fill="#dcaa3c"/><rect x="6.5" y="6.5" width="12" height="12" rx="5" fill="#c4942a"/><circle cx="12.5" cy="12.5" r="3.3" fill="#5a3e0a"/><rect x="26" y="0.5" width="21" height="13" rx="1.5" fill="#fff" stroke="#1a5a80" stroke-width="1"/><text x="28.5" y="11" font-family="Liberation Sans" font-weight="bold" font-size="10" fill="#1a4a70">DB</text><rect x="28" y="18" width="5" height="5" fill="#e8b040"/><rect x="20" y="34" width="3.5" height="3.5" fill="#e8b040"/><rect x="16" y="27" width="2" height="2" fill="#fff"/><rect x="13" y="41" width="2.5" height="2.5" fill="#f0d090"/><path d="M8 25 Q8 34 12 33 Q14 30 16 35 Q18 38 21 35 M25 36 Q32 28 40 27 L37 25 M40 27 L38 30" fill="none" stroke="#d0e8f8" stroke-width="0.9" stroke-dasharray="2 0.8"/><circle cx="40" cy="39" r="7.5" fill="url(#grn2)" stroke="#188018" stroke-width="1"/><path d="M38 35 L44 39 L38 43 Z" fill="#123a2a"/></svg>
<div class="t" style="left:1583px;top:479px;line-height:18px;letter-spacing:-0.517px;">CDC-DB</div>
<svg style="position:absolute;left:1709px;top:448px" width="32" height="32" viewBox="0 0 48 48"><defs><radialGradient id="cdcg2" cx="0.5" cy="0.6" r="0.6"><stop offset="0" stop-color="#2a8cc0"/><stop offset="1" stop-color="#1a5a80"/></radialGradient><radialGradient id="gld2" cx="0.5" cy="0.5" r="0.6"><stop offset="0" stop-color="#7a5a10"/><stop offset="0.25" stop-color="#c09030"/><stop offset="0.6" stop-color="#e0b050"/><stop offset="1" stop-color="#f0c060"/></radialGradient><radialGradient id="grn2" cx="0.4" cy="0.35" r="0.7"><stop offset="0" stop-color="#a0f070"/><stop offset="1" stop-color="#20a020"/></radialGradient></defs><path d="M6 13 H46 V20 A5 5 0 0 0 46 30 V48 H32 A5 5 0 0 0 22 48 H6 V44 A9 9 0 0 1 6 27 Z" fill="url(#cdcg2)"/><rect x="1" y="1" width="23" height="23" rx="5" fill="#f0c04c"/><rect x="4" y="4" width="17" height="17" rx="5" fill="#dcaa3c"/><rect x="6.5" y="6.5" width="12" height="12" rx="5" fill="#c4942a"/><circle cx="12.5" cy="12.5" r="3.3" fill="#5a3e0a"/><rect x="26" y="0.5" width="21" height="13" rx="1.5" fill="#fff" stroke="#1a5a80" stroke-width="1"/><text x="28.5" y="11" font-family="Liberation Sans" font-weight="bold" font-size="8" fill="#1a4a70">SAP</text><rect x="28" y="18" width="5" height="5" fill="#e8b040"/><rect x="20" y="34" width="3.5" height="3.5" fill="#e8b040"/><rect x="16" y="27" width="2" height="2" fill="#fff"/><rect x="13" y="41" width="2.5" height="2.5" fill="#f0d090"/><path d="M8 25 Q8 34 12 33 Q14 30 16 35 Q18 38 21 35 M25 36 Q32 28 40 27 L37 25 M40 27 L38 30" fill="none" stroke="#d0e8f8" stroke-width="0.9" stroke-dasharray="2 0.8"/><circle cx="40" cy="39" r="7.5" fill="url(#grn2)" stroke="#188018" stroke-width="1"/><path d="M38 35 L44 39 L38 43 Z" fill="#123a2a"/></svg>
<div class="t" style="left:1700px;top:479px;line-height:18px;letter-spacing:-0.686px;">CDC-SAP</div>
<svg style="position:absolute;left:549px;top:526px" width="16" height="16" viewBox="0 0 16 16"><rect x="1.5" y="1.5" width="14" height="12" fill="#f4f6fa" stroke="#6a7a90" stroke-width="1"/><path d="M1.5 4 H15.5" stroke="#6a7a90" stroke-width="1.2"/><path d="M2 7 H15 M2 9.5 H15 M2 12 H15" stroke="#b8c4d4" stroke-width="0.8"/><path d="M5 4 V13.5" stroke="#b8c4d4" stroke-width="0.8"/></svg>
<div class="t" style="left:569px;top:525px;line-height:18px;letter-spacing:-0.132px;">Properties</div>
<svg style="position:absolute;left:629px;top:528px" width="11" height="11" viewBox="0 0 11 11"><path d="M0.5 0.5 H3.5 L5.5 2.5 L7.5 0.5 H10.5 V3.5 L8.5 5.5 L10.5 7.5 V10.5 H7.5 L5.5 8.5 L3.5 10.5 H0.5 V7.5 L2.5 5.5 L0.5 3.5 Z" fill="#fff" stroke="#505050" stroke-width="1"/></svg>
<svg style="position:absolute;left:652px;top:526px" width="16" height="16" viewBox="0 0 16 16"><rect x="1.5" y="1.5" width="8" height="14" fill="#f0f4fa" stroke="#7a8aa0" stroke-width="0.9"/><path d="M9.5 1.5 Q14 2 13 8 Q14 14 9.5 15.5" fill="#e8eef6" stroke="#7a8aa0" stroke-width="0.9"/><circle cx="5.5" cy="5" r="2.5" fill="#e02020"/><path d="M3 14 L5.5 10 L8 14 Z" fill="#f0a020"/></svg>
<div class="t" style="left:671px;top:525px;line-height:18px;letter-spacing:0.002px;">Problems</div>
<svg style="position:absolute;left:732px;top:525px" width="16" height="16" viewBox="0 0 16 16"><circle cx="8" cy="8.5" r="6.7" fill="#fff" stroke="#1a5aa8" stroke-width="1.3"/><text x="4.8" y="12.5" font-family="Liberation Sans" font-weight="bold" font-size="10" fill="#1a5aa8">?</text></svg>
<div class="t" style="left:752px;top:525px;line-height:18px;letter-spacing:-0.067px;">Reference - online</div>
<svg style="position:absolute;left:859px;top:526px" width="16" height="16" viewBox="0 0 16 16"><rect x="1.5" y="1.5" width="12" height="10" rx="1" fill="#fff" stroke="#2a6ab8" stroke-width="1.3"/><path d="M4 5 H11 M4 8 H9" stroke="#2a6ab8" stroke-width="1"/><path d="M4 14.5 H12" stroke="#2a6ab8" stroke-width="1.5"/></svg>
<div class="t" style="left:877px;top:525px;line-height:18px;letter-spacing:-0.055px;">Console</div>
<svg style="position:absolute;left:930px;top:526px" width="16" height="16" viewBox="0 0 16 16"><path d="M2 14 L4 10 L12 2 Q14 1 15 2.5 Q15.5 4 14 5.5 L6 13 Z" fill="#f0d8a0" stroke="#a08040" stroke-width="0.9"/><path d="M2 14 L4 10 L6 13 Z" fill="#f8f0c0"/></svg>
<div class="t" style="left:950px;top:525px;line-height:18px;letter-spacing:-0.443px;">Search</div>
<svg style="position:absolute;left:1767px;top:527px" width="16" height="16" viewBox="0 0 16 16"><rect x="1.5" y="3.5" width="12" height="11" fill="#e4f2fc" stroke="#9a8a60" stroke-width="1"/><rect x="2" y="4" width="11" height="2" fill="#4a8ad8"/><path d="M7 9 L12 3 Q14 0.5 16 2.5 Q16 5 13 6 Z" fill="#2a9a3a"/><path d="M7 9 L9 6" stroke="#333" stroke-width="0.8"/></svg>
<div style="position:absolute;left:1790px;top:524px;width:1px;height:18px;background:#777"></div>
<svg style="position:absolute;left:1799px;top:525px" width="16" height="16" viewBox="0 0 16 16"><path d="M5 2 Q2 2 2 6 Q0 8 2 10 Q4 12 7 10" fill="none" stroke="#aaa" stroke-width="1"/><circle cx="10" cy="10" r="4.5" fill="#bbb" stroke="#999"/><path d="M8 8 L12 12 M12 8 L8 12" stroke="#fff" stroke-width="1.2"/></svg>
<svg style="position:absolute;left:1822px;top:525px" width="16" height="16" viewBox="0 0 16 16"><circle cx="8" cy="8.5" r="6.7" fill="#fff" stroke="#1a5aa8" stroke-width="1.3"/><text x="4.8" y="12.5" font-family="Liberation Sans" font-weight="bold" font-size="10" fill="#1a5aa8">?</text></svg>
<svg style="position:absolute;left:1849px;top:525px" width="10" height="16" viewBox="0 0 10 16"><circle cx="5" cy="2.5" r="1.6" fill="#fff" stroke="#555" stroke-width="1"/><circle cx="5" cy="7.5" r="1.6" fill="#fff" stroke="#555" stroke-width="1"/><circle cx="5" cy="12.5" r="1.6" fill="#fff" stroke="#555" stroke-width="1"/></svg>
<svg style="position:absolute;left:1870px;top:527px" width="13" height="8" viewBox="0 0 13 8"><rect x="1.5" y="1.5" width="9" height="3" fill="#fff" stroke="#555" stroke-width="1"/></svg>
<svg style="position:absolute;left:1892px;top:527px" width="13" height="13" viewBox="0 0 13 13"><rect x="2.5" y="1.5" width="9" height="9" fill="#fff" stroke="#555" stroke-width="1.1"/><path d="M2.5 3.5 H11.5" stroke="#555" stroke-width="1"/></svg>
<svg style="position:absolute;left:549px;top:553px" width="16" height="16" viewBox="0 0 16 16"><g transform="scale(0.3333)"><defs><radialGradient id="cdcg3" cx="0.5" cy="0.6" r="0.6"><stop offset="0" stop-color="#2a8cc0"/><stop offset="1" stop-color="#1a5a80"/></radialGradient><radialGradient id="gld3" cx="0.5" cy="0.5" r="0.6"><stop offset="0" stop-color="#7a5a10"/><stop offset="0.25" stop-color="#c09030"/><stop offset="0.6" stop-color="#e0b050"/><stop offset="1" stop-color="#f0c060"/></radialGradient><radialGradient id="grn3" cx="0.4" cy="0.35" r="0.7"><stop offset="0" stop-color="#a0f070"/><stop offset="1" stop-color="#20a020"/></radialGradient></defs><path d="M6 13 H46 V20 A5 5 0 0 0 46 30 V48 H32 A5 5 0 0 0 22 48 H6 V44 A9 9 0 0 1 6 27 Z" fill="url(#cdcg3)"/><rect x="1" y="1" width="23" height="23" rx="5" fill="#f0c04c"/><rect x="4" y="4" width="17" height="17" rx="5" fill="#dcaa3c"/><rect x="6.5" y="6.5" width="12" height="12" rx="5" fill="#c4942a"/><circle cx="12.5" cy="12.5" r="3.3" fill="#5a3e0a"/><rect x="26" y="0.5" width="21" height="13" rx="1.5" fill="#fff" stroke="#1a5a80" stroke-width="1"/><text x="28.5" y="11" font-family="Liberation Sans" font-weight="bold" font-size="10" fill="#1a4a70">DB</text><rect x="28" y="18" width="5" height="5" fill="#e8b040"/><rect x="20" y="34" width="3.5" height="3.5" fill="#e8b040"/><rect x="16" y="27" width="2" height="2" fill="#fff"/><rect x="13" y="41" width="2.5" height="2.5" fill="#f0d090"/><path d="M8 25 Q8 34 12 33 Q14 30 16 35 Q18 38 21 35 M25 36 Q32 28 40 27 L37 25 M40 27 L38 30" fill="none" stroke="#d0e8f8" stroke-width="0.9" stroke-dasharray="2 0.8"/><circle cx="40" cy="39" r="7.5" fill="url(#grn3)" stroke="#188018" stroke-width="1"/><path d="M38 35 L44 39 L38 43 Z" fill="#123a2a"/></g></svg>
<div class="t" style="left:570px;top:552px;line-height:20px;font-size:14.5px;font-weight:bold;color:#4a4a4a;letter-spacing:0">CDC-DB (CDC-DB)</div>
<div style="position:absolute;left:545px;top:576px;width:96px;height:338px;background:#fff;border-right:1px solid #d0d0d0"></div>
<div style="position:absolute;left:545px;top:586px;width:95px;height:1px;background:#d0d0d0"></div>
<div style="position:absolute;left:640px;top:587px;width:1px;height:21px;background:#fff"></div>
<div class="t" style="left:552px;top:587px;line-height:20px;letter-spacing:0.055px;color:#333;font-weight:bold">General</div>
<div style="position:absolute;left:545px;top:608px;width:95px;height:22px;background:linear-gradient(#f6f6f6,#e6e6e6);border-top:1px solid #fff;border-bottom:1px solid #d0d0d0"></div>
<div class="t" style="left:552px;top:610px;line-height:18px;letter-spacing:0.057px;color:#505050">Description</div>
<div style="position:absolute;left:545px;top:630px;width:95px;height:22px;background:linear-gradient(#f6f6f6,#e6e6e6);border-top:1px solid #fff;border-bottom:1px solid #d0d0d0"></div>
<div class="t" style="left:552px;top:632px;line-height:18px;letter-spacing:0.063px;color:#505050">Advanced</div>
<div style="position:absolute;left:545px;top:652px;width:95px;height:22px;background:linear-gradient(#f6f6f6,#e6e6e6);border-top:1px solid #fff;border-bottom:1px solid #d0d0d0"></div>
<div class="t" style="left:552px;top:654px;line-height:18px;letter-spacing:-0.515px;color:#505050">Tags</div>
<div style="position:absolute;left:545px;top:674px;width:95px;height:22px;background:linear-gradient(#f6f6f6,#e6e6e6);border-top:1px solid #fff;border-bottom:1px solid #d0d0d0"></div>
<div class="t" style="left:552px;top:676px;line-height:18px;letter-spacing:-0.059px;color:#505050">Conversations</div>
<div style="position:absolute;left:545px;top:696px;width:95px;height:22px;background:linear-gradient(#f6f6f6,#e6e6e6);border-top:1px solid #fff;border-bottom:1px solid #d0d0d0"></div>
<div class="t" style="left:552px;top:698px;line-height:18px;letter-spacing:0.600px;color:#505050">Output</div>
<div style="position:absolute;left:545px;top:718px;width:95px;height:22px;background:linear-gradient(#f6f6f6,#e6e6e6);border-top:1px solid #fff;border-bottom:1px solid #d0d0d0"></div>
<div class="t" style="left:552px;top:720px;line-height:18px;letter-spacing:0.007px;color:#505050">Fault</div>
<div class="t" style="left:651px;top:588px;line-height:18px;letter-spacing:0.078px;font-weight:bold">Name:</div>
<div class="t" style="left:651px;top:614px;line-height:18px;letter-spacing:-0.433px;font-weight:bold">JDBC Connection:</div>
<div class="t" style="left:651px;top:643px;line-height:18px;letter-spacing:-0.125px;font-weight:bold">Table Name:</div>
<div class="t" style="left:651px;top:671px;line-height:18px;letter-spacing:-0.024px;font-weight:bold">Output Format:</div>
<div style="position:absolute;left:862px;top:586px;width:1037px;height:21px;background:#fff;border:1px solid #e0e0e0;border-bottom:1px solid #909090"></div>
<div class="t" style="left:868px;top:588px;line-height:18px;letter-spacing:-0.338px;">CDC-DB</div>
<div style="position:absolute;left:862px;top:612px;width:404px;height:22px;background:#fff;border:1px solid #b8b8b8"></div>
<div style="position:absolute;left:1246px;top:613px;width:19px;height:20px;background:#efefef"></div>
<svg style="position:absolute;left:866px;top:615px" width="16" height="16" viewBox="0 0 16 16"><rect x="1.5" y="1.5" width="12" height="12" fill="#fff" stroke="#6a7a90" stroke-width="1"/><rect x="2" y="2" width="11" height="2.5" fill="#4a8ad8"/><path d="M2 7 H13 M2 10 H13 M6 4.5 V13" stroke="#a0b0c4" stroke-width="0.8"/><circle cx="12.5" cy="12.5" r="3" fill="#e04040" stroke="#a02020" stroke-width="0.6"/></svg>
<div class="t" style="left:885px;top:614px;line-height:18px;letter-spacing:0.008px;">Property</div>
<div style="position:absolute;left:1271px;top:612px;width:21px;height:22px;background:#f4f4f4;border:1px solid #d0d0d0"></div>
<svg style="position:absolute;left:1274px;top:615px" width="16" height="16" viewBox="0 0 16 16"><circle cx="7" cy="10" r="5.5" fill="#5a9ad0" stroke="#2a5a8a" stroke-width="0.7"/><path d="M2 9 Q7 12 12 9" fill="none" stroke="#a8e0a0" stroke-width="1.2"/><rect x="3" y="4" width="6" height="5" fill="#c0c8d0" stroke="#777" stroke-width="0.5"/><path d="M12 1 L13 3.5 L15.5 3.5 L13.5 5 L14.5 7.5 L12 6 L9.5 7.5 L10.5 5 L8.5 3.5 L11 3.5 Z" fill="#f0c020"/></svg>
<div style="position:absolute;left:1298px;top:612px;width:492px;height:22px;background:#fff;border:1px solid #b8b8b8"></div>
<div class="t" style="left:1301px;top:614px;line-height:18px;letter-spacing:-0.306px;">example.DB2_JDBCConnectionResource</div>
<svg style="position:absolute;left:1797px;top:614px" width="16" height="16" viewBox="0 0 16 16"><rect x="1.5" y="1.5" width="13" height="12" fill="#fff" stroke="#555" stroke-width="1"/><rect x="2" y="2" width="12" height="2" fill="#4a8ad8"/><path d="M2 6.5 H14 M2 9.5 H14 M5 4 V13" stroke="#7a8aa0" stroke-width="0.8"/><rect x="10.5" y="10.5" width="5" height="5" fill="#fff" stroke="#555" stroke-width="0.9"/></svg>
<div style="position:absolute;left:1822px;top:611px;width:23px;height:23px;background:#f4f4f4;border:1px solid #d8d8d8;border-radius:2px"></div>
<svg style="position:absolute;left:1825px;top:614px" width="16" height="16" viewBox="0 0 16 16"><circle cx="6.5" cy="6.5" r="4.8" fill="#dcecf6" stroke="#2a2a2a" stroke-width="1.4"/><path d="M10 10 L14.5 14.5" stroke="#1a4a8a" stroke-width="2.4" stroke-linecap="round"/></svg>
<div style="position:absolute;left:1850px;top:611px;width:23px;height:23px;background:#f4f4f4;border:1px solid #d8d8d8;border-radius:2px"></div>
<svg style="position:absolute;left:1853px;top:614px" width="16" height="16" viewBox="0 0 16 16"><rect x="4.5" y="1.5" width="10" height="13" fill="#fffdf0" stroke="#b8962a" stroke-width="1"/><path d="M5.5 1 H14" stroke="#3a6ab8" stroke-width="1.2" stroke-dasharray="1 1"/><path d="M1 7 H5.5 V4.5 L10 8.5 L5.5 12.5 V10 H1 Z" fill="#f6d850" stroke="#b88a10" stroke-width="0.8"/></svg>
<div style="position:absolute;left:1877px;top:611px;width:23px;height:23px;background:#f4f4f4;border:1px solid #d8d8d8;border-radius:2px"></div>
<svg style="position:absolute;left:1880px;top:614px" width="16" height="16" viewBox="0 0 16 16"><circle cx="8" cy="8" r="6.6" fill="#c4c4c4" stroke="#7a7a7a" stroke-width="1.5"/><path d="M5.3 5.3 L10.7 10.7 M10.7 5.3 L5.3 10.7" stroke="#fff" stroke-width="2.2"/></svg>
<div style="position:absolute;left:862px;top:638px;width:894px;height:23px;background:#fff;border:1px solid #b8b8b8"></div>
<div style="position:absolute;left:1736px;top:639px;width:19px;height:21px;background:#efefef"></div>
<svg style="position:absolute;left:865px;top:642px" width="22" height="14" viewBox="0 0 22 14"><text x="0" y="11.5" font-family="Liberation Sans" font-weight="bold" font-size="12" fill="#2a6aa8" textLength="15" lengthAdjust="spacingAndGlyphs">ABC</text><rect x="18" y="5" width="1.2" height="1.2" fill="#333"/><rect x="18" y="9" width="1.2" height="1.2" fill="#333"/></svg>
<div class="t" style="left:889px;top:640px;line-height:18px;letter-spacing:-0.033px;">schema.table</div>
<svg style="position:absolute;left:1764px;top:642px" width="16" height="16" viewBox="0 0 16 16"><circle cx="7" cy="10" r="5.5" fill="#5a9ad0" stroke="#2a5a8a" stroke-width="0.7"/><path d="M2 9 Q7 12 12 9" fill="none" stroke="#a8e0a0" stroke-width="1.2"/><rect x="3" y="4" width="6" height="5" fill="#c0c8d0" stroke="#777" stroke-width="0.5"/><path d="M12 1 L13 3.5 L15.5 3.5 L13.5 5 L14.5 7.5 L12 6 L9.5 7.5 L10.5 5 L8.5 3.5 L11 3.5 Z" fill="#f0c020"/></svg>
<svg style="position:absolute;left:1787px;top:642px" width="16" height="16" viewBox="0 0 16 16"><path d="M7 1 L13 4 L13 11 L7 14.5 L1 11 L1 4 Z" fill="#4a90d8" stroke="#2a5a9a" stroke-width="0.8"/><path d="M1 4 L7 7 L13 4 M7 7 V14.5" fill="none" stroke="#bfe0ff" stroke-width="0.8"/><rect x="8.5" y="7.5" width="6" height="7.5" fill="#fff" stroke="#555" stroke-width="0.7"/><path d="M10 10 H13 M10 12 H13" stroke="#777" stroke-width="0.6"/></svg>
<div style="position:absolute;left:1809px;top:639px;width:21px;height:22px;background:#f4f4f4;border:1px solid #d8d8d8;border-radius:2px"></div>
<svg style="position:absolute;left:1811px;top:641px" width="16" height="16" viewBox="0 0 16 16"><rect x="4.5" y="1.5" width="10" height="13" fill="#fffdf0" stroke="#b8962a" stroke-width="1"/><path d="M5.5 1 H14" stroke="#3a6ab8" stroke-width="1.2" stroke-dasharray="1 1"/><path d="M1 7 H5.5 V4.5 L10 8.5 L5.5 12.5 V10 H1 Z" fill="#f6d850" stroke="#b88a10" stroke-width="0.8"/></svg>
<div style="position:absolute;left:1832px;top:639px;width:22px;height:22px;background:#f4f4f4;border:1px solid #d8d8d8;border-radius:2px"></div>
<svg style="position:absolute;left:1835px;top:642px" width="16" height="16" viewBox="0 0 16 16"><circle cx="8" cy="8" r="6.6" fill="#c4c4c4" stroke="#7a7a7a" stroke-width="1.5"/><path d="M5.3 5.3 L10.7 10.7 M10.7 5.3 L5.3 10.7" stroke="#fff" stroke-width="2.2"/></svg>
<div style="position:absolute;left:1859px;top:638px;width:39px;height:24px;background:#fff;border:1px solid #d8d8d8;border-radius:2px"></div>
<div class="t" style="left:1863px;top:642px;line-height:18px;letter-spacing:0.250px;">Fetch</div>
<div style="position:absolute;left:862px;top:668px;width:1037px;height:23px;background:#fff;border:1px solid #b8b8b8"></div>
<div style="position:absolute;left:1879px;top:669px;width:19px;height:21px;background:#efefef"></div>
<div class="t" style="left:866px;top:671px;line-height:18px;letter-spacing:-1.000px;">JSON</div></body></html>
